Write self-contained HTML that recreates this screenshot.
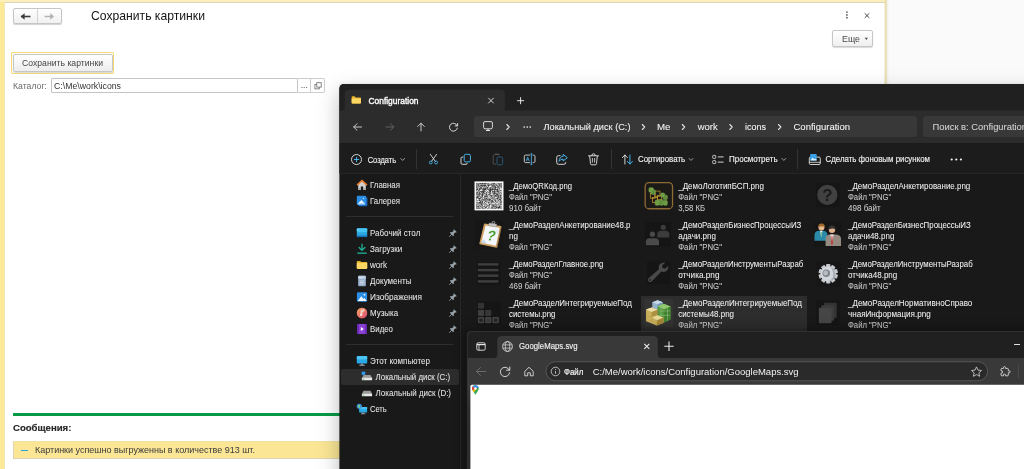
<!DOCTYPE html>
<html lang="ru"><head><meta charset="utf-8"><title>Сохранить картинки</title>
<style>
html,body{margin:0;padding:0;}
body{width:1024px;height:469px;overflow:hidden;background:#fafafa;position:relative;font-family:"Liberation Sans",sans-serif;}
.a{position:absolute;display:block;box-sizing:border-box;}
.t{position:absolute;white-space:pre;line-height:1;display:block;transform-origin:0 84.65%;}
.win{position:absolute;overflow:hidden;}
#root{position:absolute;left:0;top:0;width:1024px;height:469px;overflow:hidden;will-change:transform;transform:translateZ(0);}
</style></head><body><div id="root">
<div class="a" style="left:0px;top:0px;width:885px;height:469px;background:#fff;"></div>
<div class="a" style="left:884px;top:0px;width:5px;height:469px;background:linear-gradient(90deg,#ffffff 0,#e8deb0 22%,#e8deb0 42%,#f1ede0 60%,#fafafa 100%);"></div>
<div class="a" style="left:0px;top:0px;width:885px;height:2px;background:linear-gradient(#fcf2c2,#fbedb0);"></div>
<div class="a" style="left:0px;top:2px;width:885px;height:1px;background:#d9d5be;"></div>
<div class="a" style="left:0px;top:2px;width:5px;height:467px;background:linear-gradient(90deg,#fbea98 0,#fbea98 76%,#ecdfa2 86%,#fefbee 100%);"></div>
<div class="a" style="left:13px;top:8px;width:49px;height:16px;border:1px solid #c6c6c6;border-radius:2px;background:linear-gradient(#ffffff,#f0f0f0);box-shadow:0 1px 1px rgba(0,0,0,.18);"></div>
<div class="a" style="left:37px;top:9px;width:1px;height:14px;background:#d4d4d4;"></div>
<svg class="a" style="left:20px;top:12px;" width="12" height="9" viewBox="0 0 12 9"><g transform="translate(0.000 0.000)"><path d="M1 4.5H10.5" stroke="#3d3d3d" stroke-width="1.6" fill="none"/><path d="M0.6 4.5L4.6 1.2V7.8Z" fill="#3d3d3d"/></g></svg>
<svg class="a" style="left:43px;top:12px;" width="12" height="9" viewBox="0 0 12 9"><g transform="translate(0.000 0.000)"><path d="M1.5 4.5H10" stroke="#b4b4b4" stroke-width="1.5" fill="none"/><path d="M11.2 4.5L7.2 1.2V7.8Z" fill="#b4b4b4"/></g></svg>
<span class="t" style="left:91.00px;top:10.10px;font-size:12.18px;color:#151515;">Сохранить картинки</span>
<svg class="a" style="left:844px;top:10px;" width="6" height="10" viewBox="0 0 6 10"><g transform="translate(0.000 0.500)"><circle cx="2.9" cy="1.6" r="0.85" fill="#505050"/><circle cx="2.9" cy="4.4" r="0.85" fill="#505050"/><circle cx="2.9" cy="7.2" r="0.85" fill="#505050"/></g></svg>
<svg class="a" style="left:863px;top:11px;" width="8" height="9" viewBox="0 0 8 9"><g transform="translate(0.000 0.700)"><path d="M1.7 1.6L6.3 6.2M6.3 1.6L1.7 6.2" stroke="#484848" stroke-width="1" fill="none"/></g></svg>
<div class="a" style="left:832px;top:30px;width:41px;height:17px;border:1px solid #c6c6c6;border-radius:2px;background:linear-gradient(#ffffff,#efefef);box-shadow:0 1px 1px rgba(0,0,0,.15);"></div>
<span class="t" style="left:842.00px;top:35.00px;font-size:8.85px;color:#4a4a4a;">Еще</span>
<svg class="a" style="left:864px;top:37px;" width="5" height="4" viewBox="0 0 5 4"><g transform="translate(0.300 0.400)"><path d="M0.3 0.4H3.7L2 2.6Z" fill="#555"/></g></svg>
<div class="a" style="left:11px;top:52px;width:103px;height:22px;border:1px solid #f6da7c;border-radius:1px;background:#fffef6;"></div>
<div class="a" style="left:13px;top:54px;width:100px;height:18px;border:1px solid #c6c6c6;border-radius:2px;background:linear-gradient(#ffffff,#ededed);box-shadow:0 1px 1px rgba(0,0,0,.15);"></div>
<span class="t" style="left:22.00px;top:58.70px;font-size:8.65px;color:#454545;letter-spacing:0.014px;">Сохранить картинки</span>
<span class="t" style="left:13.00px;top:81.80px;font-size:8.69px;color:#6a6a6a;letter-spacing:0.008px;">Каталог:</span>
<div class="a" style="left:51px;top:78px;width:247px;height:15px;border:1px solid #c4c4c4;border-radius:1px;background:#fff;"></div>
<span class="t" style="left:54.00px;top:81.80px;font-size:8.74px;color:#333;">C:\Me\work\icons</span>
<div class="a" style="left:298px;top:78px;width:13px;height:15px;border:1px solid #cdcdcd;border-left:none;background:#fff;"></div>
<span class="t" style="left:300.70px;top:80.80px;font-size:8.5px;color:#444;">...</span>
<div class="a" style="left:311px;top:78px;width:14px;height:15px;border:1px solid #cdcdcd;border-left:none;background:#fff;border-radius:0 2px 2px 0;"></div>
<svg class="a" style="left:314px;top:82px;" width="8" height="8" viewBox="0 0 8 8"><g transform="translate(0.400 0.200)"><rect x="0.5" y="2.3" width="4.4" height="4.4" fill="#fff" stroke="#6a6a6a" stroke-width="0.8"/><rect x="2.4" y="0.5" width="4.4" height="4.4" fill="#fff" stroke="#6a6a6a" stroke-width="0.8"/></g></svg>
<div class="a" style="left:13px;top:413px;width:900px;height:3px;background:#069a46;"></div>
<span class="t" style="left:13.00px;top:423.40px;font-size:9.58px;color:#262626;font-weight:bold;-webkit-text-stroke:0.15px #262626;">Сообщения:</span>
<div class="a" style="left:13px;top:441px;width:900px;height:18px;background:#fbe696;border:1px solid #dcd5b4;border-top-color:#f0e2a0;"></div>
<div class="a" style="left:20.5px;top:449.6px;width:7.5px;height:1.4px;background:#2ea3dc;"></div>
<span class="t" style="left:35.00px;top:446.20px;font-size:8.99px;color:#3a3a3a;">Картинки успешно выгруженны в количестве 913 шт.</span>
<div class="a" style="left:343px;top:87px;width:700px;height:400px;background:#191919;box-shadow:0 9px 20px 4px rgba(0,0,0,.26), 0 0 3px 3px rgba(0,0,0,.10);"></div>
<svg class="a" style="left:330px;top:74px" width="694" height="395" viewBox="330 74 694 395">
<path d="M339.4 480V88.9Q339.4 83.9 344.4 83.9H1030V480Z" fill="#191919"/>
<path d="M339.4 111V88.9Q339.4 83.9 344.4 83.9H1030V111Z" fill="#202020"/>
<path d="M344.8 111V94Q344.8 89.7 349.1 89.7H500.6Q504.9 89.7 504.9 94V111Z" fill="#2c2c2c"/>
<rect x="339.4" y="110.4" width="700" height="32.8" fill="#2c2c2c"/>
<rect x="339.4" y="143.2" width="700" height="30.2" fill="#1c1c1c"/>
<rect x="339.4" y="172.9" width="700" height="0.8" fill="#2d2d2d"/>
</svg>
<svg class="a" style="left:341px;top:107px;" width="4" height="4" viewBox="0 0 4 4"><g transform="translate(0.800 0.400)"><path d="M3 0V3H0Q3 3 3 0Z" fill="#2c2c2c"/></g></svg>
<svg class="a" style="left:504px;top:107px;" width="4" height="4" viewBox="0 0 4 4"><g transform="translate(0.900 0.400)"><path d="M0 0V3H3Q0 3 0 0Z" fill="#2c2c2c"/></g></svg>
<svg class="a" style="left:351px;top:96px;" width="11" height="8" viewBox="0 0 11 8"><g transform="translate(0.400 0.000) scale(0.8909 0.9176)"><path d="M0.3 1.2Q0.3 0.4 1.1 0.4H3.6L4.8 1.5H9.9Q10.7 1.5 10.7 2.3V7.4Q10.7 8.2 9.9 8.2H1.1Q0.3 8.2 0.3 7.4Z" fill="#e8b62c"/><path d="M0.3 2.6H10.7V7.4Q10.7 8.2 9.9 8.2H1.1Q0.3 8.2 0.3 7.4Z" fill="#fbd663"/></g></svg>
<span class="t" style="left:368.50px;top:96.80px;font-size:8.41px;color:#ffffff;transform:scaleY(1.1);transform-origin:0 7.00px;-webkit-text-stroke:0.35px #ffffff;">Configuration</span>
<svg class="a" style="left:487px;top:97px;" width="8" height="8" viewBox="0 0 8 8"><g transform="translate(0.000 0.000)"><path d="M1.3 0.9L6.7 6.3M6.7 0.9L1.3 6.3" stroke="#e8e8e8" stroke-width="0.9" fill="none"/></g></svg>
<svg class="a" style="left:516px;top:96px;" width="10" height="10" viewBox="0 0 10 10"><g transform="translate(0.000 0.000)"><path d="M4.6 1.2V8.2M1.1 4.7H8.1" stroke="#ececec" stroke-width="0.95" fill="none"/></g></svg>
<svg class="a" style="left:353px;top:123px;" width="9" height="8" viewBox="0 0 9 8"><g transform="translate(0.000 0.000)"><path d="M8.5 4H0.8M4 0.7L0.7 4L4 7.3" stroke="#e6e6e6" stroke-width="0.85" fill="none" stroke-linecap="round" stroke-linejoin="round"/></g></svg>
<svg class="a" style="left:385px;top:123px;" width="10" height="8" viewBox="0 0 10 8"><g transform="translate(0.500 0.000)"><path d="M0.5 4H8.2M5 0.7L8.3 4L5 7.3" stroke="#6a6a6a" stroke-width="0.85" fill="none" stroke-linecap="round" stroke-linejoin="round"/></g></svg>
<svg class="a" style="left:417px;top:122px;" width="8" height="10" viewBox="0 0 8 10"><g transform="translate(0.000 0.500)"><path d="M4 8.5V0.8M0.7 4L4 0.7L7.3 4" stroke="#e6e6e6" stroke-width="0.85" fill="none" stroke-linecap="round" stroke-linejoin="round"/></g></svg>
<svg class="a" style="left:448px;top:121px;" width="11" height="12" viewBox="0 0 11 12"><g transform="translate(0.000 0.500)"><path d="M9.2 4.2A4 4 0 1 0 9.4 6.6" stroke="#e6e6e6" stroke-width="0.9" fill="none" stroke-linecap="round"/><path d="M9.6 2V4.4H7.2" stroke="#e6e6e6" stroke-width="0.9" fill="none" stroke-linecap="round" stroke-linejoin="round"/></g></svg>
<div class="a" style="left:474px;top:116px;width:443px;height:21px;background:#383838;border-radius:3px;"></div>
<svg class="a" style="left:483px;top:121px;" width="10" height="11" viewBox="0 0 10 11"><g transform="translate(0.000 0.000)"><rect x="0.6" y="0.6" width="8.8" height="7.2" rx="1.4" fill="none" stroke="#e8e8e8" stroke-width="0.9"/><path d="M3 9.5H7M5 7.8V9.4" stroke="#e8e8e8" stroke-width="1"/></g></svg>
<svg class="a" style="left:505px;top:123px;" width="6" height="8" viewBox="0 0 6 8"><g transform="translate(0.500 0.500)"><path d="M1.3 1L3.7 3.5L1.3 6" stroke="#e0e0e0" stroke-width="1.1" fill="none" stroke-linecap="round" stroke-linejoin="round"/></g></svg>
<svg class="a" style="left:523px;top:125px;" width="9" height="4" viewBox="0 0 9 4"><g transform="translate(0.000 0.000)"><circle cx="1.2" cy="2.1" r="0.82" fill="#ececec"/><circle cx="4.2" cy="2.1" r="0.82" fill="#ececec"/><circle cx="7.2" cy="2.1" r="0.82" fill="#ececec"/></g></svg>
<span class="t" style="left:543.50px;top:123.00px;font-size:9.19px;color:#f2f2f2;letter-spacing:0.010px;-webkit-text-stroke:0.08px #f2f2f2;">Локальный диск (C:)</span>
<svg class="a" style="left:641px;top:123px;" width="5" height="8" viewBox="0 0 5 8"><g transform="translate(0.000 0.500)"><path d="M1.3 1L3.7 3.5L1.3 6" stroke="#e0e0e0" stroke-width="1.1" fill="none" stroke-linecap="round" stroke-linejoin="round"/></g></svg>
<span class="t" style="left:657.00px;top:122.00px;font-size:9.72px;color:#f2f2f2;letter-spacing:-0.008px;-webkit-text-stroke:0.08px #f2f2f2;">Me</span>
<svg class="a" style="left:681px;top:123px;" width="5" height="8" viewBox="0 0 5 8"><g transform="translate(0.000 0.500)"><path d="M1.3 1L3.7 3.5L1.3 6" stroke="#e0e0e0" stroke-width="1.1" fill="none" stroke-linecap="round" stroke-linejoin="round"/></g></svg>
<span class="t" style="left:697.70px;top:122.00px;font-size:9.47px;color:#f2f2f2;-webkit-text-stroke:0.08px #f2f2f2;">work</span>
<svg class="a" style="left:728px;top:123px;" width="6" height="8" viewBox="0 0 6 8"><g transform="translate(0.500 0.500)"><path d="M1.3 1L3.7 3.5L1.3 6" stroke="#e0e0e0" stroke-width="1.1" fill="none" stroke-linecap="round" stroke-linejoin="round"/></g></svg>
<span class="t" style="left:745.00px;top:123.00px;font-size:9.0px;color:#f2f2f2;-webkit-text-stroke:0.08px #f2f2f2;">icons</span>
<svg class="a" style="left:777px;top:123px;" width="6" height="8" viewBox="0 0 6 8"><g transform="translate(0.200 0.500)"><path d="M1.3 1L3.7 3.5L1.3 6" stroke="#e0e0e0" stroke-width="1.1" fill="none" stroke-linecap="round" stroke-linejoin="round"/></g></svg>
<span class="t" style="left:793.50px;top:122.00px;font-size:9.5px;color:#f2f2f2;-webkit-text-stroke:0.08px #f2f2f2;">Configuration</span>
<div class="a" style="left:922.5px;top:116px;width:120px;height:21px;background:#383838;border-radius:3px;"></div>
<span class="t" style="left:932.50px;top:123.00px;font-size:9.38px;color:#d0d0d0;-webkit-text-stroke:0.08px #d0d0d0;">Поиск в: Configuration</span>
<svg class="a" style="left:350px;top:153px;" width="13" height="13" viewBox="0 0 13 13"><g transform="translate(0.500 0.500)"><circle cx="6" cy="6" r="5" fill="none" stroke="#e8e8e8" stroke-width="0.9"/><path d="M6 3.4V8.6M3.4 6H8.6" stroke="#4cc2ff" stroke-width="0.9"/></g></svg>
<span class="t" style="left:367.70px;top:156.60px;font-size:7.5px;color:#f2f2f2;transform:scaleY(1.1);transform-origin:0 6.00px;-webkit-text-stroke:0.12px #f2f2f2;">Создать</span>
<svg class="a" style="left:400px;top:157px;" width="6" height="5" viewBox="0 0 6 5"><g transform="translate(0.200 0.750)"><path d="M0.6 0.7L2.5 2.7L4.4 0.7" stroke="#bdbdbd" stroke-width="0.8" fill="none" stroke-linecap="round" stroke-linejoin="round"/></g></svg>
<div class="a" style="left:416px;top:148.5px;width:1px;height:20.5px;background:#333;"></div>
<svg class="a" style="left:428px;top:153px;" width="12" height="13" viewBox="0 0 12 13"><g transform="translate(0.000 0.000)"><path d="M2.3 1.3L7.3 8.3M8.6 1.3L3.6 8.3" stroke="#e8e8e8" stroke-width="0.85" fill="none" stroke-linecap="round"/><circle cx="2.8" cy="9.5" r="1.45" fill="none" stroke="#4cb8f0" stroke-width="0.85"/><circle cx="8.1" cy="9.5" r="1.45" fill="none" stroke="#4cb8f0" stroke-width="0.85"/></g></svg>
<svg class="a" style="left:460px;top:153px;" width="12" height="13" viewBox="0 0 12 13"><g transform="translate(0.000 0.500)"><path d="M3.4 3.6H2.2Q1 3.6 1 4.8V9.6Q1 10.8 2.2 10.8H6Q7.2 10.8 7.2 9.6" fill="none" stroke="#e8e8e8" stroke-width="0.9"/><rect x="4.2" y="0.8" width="6.2" height="7.6" rx="1.4" fill="none" stroke="#4cc2ff" stroke-width="0.9"/></g></svg>
<svg class="a" style="left:492px;top:153px;" width="12" height="13" viewBox="0 0 12 13"><g transform="translate(0.000 0.000)"><path d="M7.8 1.6H2.4Q1.2 1.6 1.2 2.8V10Q1.2 11.2 2.4 11.2H4" fill="none" stroke="#555" stroke-width="0.9"/><rect x="5" y="4" width="5.6" height="7.8" rx="1.2" fill="none" stroke="#2a5d7c" stroke-width="0.9"/><path d="M3.2 1.2H6.6" stroke="#555" stroke-width="1.2"/></g></svg>
<svg class="a" style="left:523px;top:153px;" width="13" height="13" viewBox="0 0 13 13"><g transform="translate(0.000 0.000)"><path d="M7.2 2.1H2.6Q1.3 2.1 1.3 3.4V8.3Q1.3 9.6 2.6 9.6H7.2M9.6 2.1H10.7Q12 2.1 12 3.4V8.3Q12 9.6 10.7 9.6H9.6" fill="none" stroke="#e0e0e0" stroke-width="0.85"/><path d="M8.4 0.8V11.4M7.4 0.8H9.4M7.4 11.4H9.4" stroke="#4cb8f0" stroke-width="0.85" fill="none"/><path d="M3.2 8L4.7 4.1L6.2 8M3.8 6.8H5.6" stroke="#4cb8f0" stroke-width="0.75" fill="none"/></g></svg>
<svg class="a" style="left:555px;top:153px;" width="14" height="13" viewBox="0 0 14 13"><g transform="translate(0.500 0.500)"><path d="M5 2.2H3Q1.2 2.2 1.2 4V9Q1.2 10.8 3 10.8H8.4Q10.2 10.8 10.2 9V8.4" fill="none" stroke="#e8e8e8" stroke-width="0.9"/><path d="M7.6 0.9L11.8 4.2L7.6 7.5V5.6Q5 5.4 3.6 7.8Q3.8 3.2 7.6 2.9Z" fill="none" stroke="#4cc2ff" stroke-width="0.9" stroke-linejoin="round"/></g></svg>
<svg class="a" style="left:587px;top:153px;" width="13" height="13" viewBox="0 0 13 13"><g transform="translate(0.500 0.000)"><path d="M1 2.8H11M4.2 2.6Q4.2 0.8 6 0.8Q7.8 0.8 7.8 2.6" fill="none" stroke="#e8e8e8" stroke-width="0.9" stroke-linecap="round"/><path d="M2.2 3L3 10.6Q3.1 11.8 4.3 11.8H7.7Q8.9 11.8 9 10.6L9.8 3" fill="none" stroke="#e8e8e8" stroke-width="0.9"/><path d="M4.9 5V9.6M7.1 5V9.6" stroke="#e8e8e8" stroke-width="0.8"/></g></svg>
<div class="a" style="left:611px;top:148.5px;width:1px;height:20.5px;background:#333;"></div>
<svg class="a" style="left:621px;top:154px;" width="13" height="11" viewBox="0 0 13 11"><g transform="translate(0.500 0.000)"><path d="M3.4 10V1M0.9 3.6L3.4 1L5.9 3.6" stroke="#e8e8e8" stroke-width="0.9" fill="none" stroke-linecap="round" stroke-linejoin="round"/><path d="M8.4 1V10M5.9 7.4L8.4 10L10.9 7.4" stroke="#4cc2ff" stroke-width="0.9" fill="none" stroke-linecap="round" stroke-linejoin="round"/></g></svg>
<span class="t" style="left:638.00px;top:156.40px;font-size:7.9px;color:#f2f2f2;transform:scaleY(1.1);transform-origin:0 6.00px;-webkit-text-stroke:0.12px #f2f2f2;">Сортировать</span>
<svg class="a" style="left:688px;top:157px;" width="6" height="5" viewBox="0 0 6 5"><g transform="translate(0.500 0.750)"><path d="M0.6 0.7L2.5 2.7L4.4 0.7" stroke="#bdbdbd" stroke-width="0.8" fill="none" stroke-linecap="round" stroke-linejoin="round"/></g></svg>
<svg class="a" style="left:712px;top:154px;" width="12" height="11" viewBox="0 0 12 11"><g transform="translate(0.000 0.500)"><rect x="0.7" y="0.9" width="3" height="3" rx="0.7" fill="none" stroke="#e8e8e8" stroke-width="0.8"/><rect x="0.7" y="6.1" width="3" height="3" rx="0.7" fill="none" stroke="#e8e8e8" stroke-width="0.8"/><path d="M5.8 2.4H11.6M5.8 7.6H11.6" stroke="#e8e8e8" stroke-width="0.9"/></g></svg>
<span class="t" style="left:729.00px;top:156.40px;font-size:8.01px;color:#f2f2f2;transform:scaleY(1.1);transform-origin:0 6.00px;-webkit-text-stroke:0.12px #f2f2f2;">Просмотреть</span>
<svg class="a" style="left:781px;top:157px;" width="6" height="5" viewBox="0 0 6 5"><g transform="translate(0.300 0.750)"><path d="M0.6 0.7L2.5 2.7L4.4 0.7" stroke="#bdbdbd" stroke-width="0.8" fill="none" stroke-linecap="round" stroke-linejoin="round"/></g></svg>
<div class="a" style="left:797px;top:148.5px;width:1px;height:20.5px;background:#333;"></div>
<svg class="a" style="left:808px;top:153px;" width="14" height="13" viewBox="0 0 14 13"><g transform="translate(0.500 0.500)"><rect x="0.8" y="3.6" width="11" height="7.4" rx="1.2" fill="#1c1c1c" stroke="#e8e8e8" stroke-width="0.9"/><rect x="1.6" y="0.6" width="6.6" height="6.4" rx="1" fill="#3aa0e8"/><path d="M2 6.6L4.2 4.2L6 5.8L7 5L8.2 6.2V7H2Z" fill="#d6efff"/><path d="M0.8 8.8H11.8" stroke="#e8e8e8" stroke-width="0.8"/></g></svg>
<span class="t" style="left:825.50px;top:156.40px;font-size:7.88px;color:#f2f2f2;transform:scaleY(1.1);transform-origin:0 6.00px;-webkit-text-stroke:0.12px #f2f2f2;">Сделать фоновым рисунком</span>
<svg class="a" style="left:950px;top:157px;" width="13" height="5" viewBox="0 0 13 5"><g transform="translate(0.000 0.800)"><circle cx="1.7" cy="1.7" r="1.1" fill="#f4f4f4"/><circle cx="6.3" cy="1.7" r="1.1" fill="#f4f4f4"/><circle cx="10.9" cy="1.7" r="1.1" fill="#f4f4f4"/></g></svg>
<div class="a" style="left:460px;top:174px;width:1px;height:300px;background:#272727;"></div>
<div class="a" style="left:341px;top:369px;width:117.5px;height:15.5px;background:#2d2d2d;border-radius:2px;"></div>
<div class="a" style="left:346px;top:216px;width:107px;height:1px;background:#2e2e2e;"></div>
<div class="a" style="left:346px;top:344px;width:107px;height:1px;background:#2e2e2e;"></div>
<svg width="0" height="0" style="position:absolute"><defs><linearGradient id="mg" x1="0" y1="0" x2="1" y2="1"><stop offset="0" stop-color="#f2a65a"/><stop offset="1" stop-color="#d94a7a"/></linearGradient></defs></svg>
<svg class="a" style="left:356px;top:179px;" width="12" height="12" viewBox="0 0 12 12"><g transform="translate(0.500 0.500)"><path d="M1.7 5V10.4H4.3V6.9H6.7V10.4H9.3V5L5.5 1.6Z" fill="#cfcfcf"/><path d="M1.7 8.4H4.3V10.4H1.7ZM6.7 8.4H9.3V10.4H6.7Z" fill="#a8a8a8"/><path d="M5.5 0L11 5.1L10 6.2L5.5 2.1L1 6.2L0 5.1Z" fill="#f07f2c"/></g></svg>
<span class="t" style="left:370.00px;top:182.20px;font-size:7.88px;color:#e6e6e6;transform:scaleY(1.1);transform-origin:0 6.00px;-webkit-text-stroke:0.04px #e6e6e6;">Главная</span>
<svg class="a" style="left:356px;top:195px;" width="12" height="12" viewBox="0 0 12 12"><g transform="translate(0.500 0.500)"><rect x="1.9" y="1.7" width="9" height="9" rx="1.2" fill="#1b6cc0"/><rect x="0.3" y="0.2" width="9.4" height="9" rx="1.2" fill="#2b8de4"/><path d="M1.2 8.3L4.9 4.5L8.6 8.3Z" fill="#f2f8ff"/><path d="M1 8.3H8.8V8.6Q8.8 9.2 8.2 9.2H1.6Q1 9.2 1 8.6Z" fill="#8cc4f4"/><circle cx="7" cy="2.8" r="0.6" fill="#e8f4ff"/></g></svg>
<span class="t" style="left:370.00px;top:198.20px;font-size:7.82px;color:#e6e6e6;transform:scaleY(1.1);transform-origin:0 6.00px;-webkit-text-stroke:0.04px #e6e6e6;">Галерея</span>
<svg class="a" style="left:356px;top:227px;" width="12" height="12" viewBox="0 0 12 12"><g transform="translate(0.500 0.500)"><rect x="0.3" y="0.8" width="10.4" height="8.2" rx="1" fill="#2aa5e0"/><rect x="0.3" y="0.8" width="10.4" height="4" rx="1" fill="#45c3f2"/><rect x="0.3" y="8" width="10.4" height="1.6" fill="#1574b5"/><rect x="1.2" y="1.8" width="0.9" height="0.9" fill="#d8f3ff"/></g></svg>
<span class="t" style="left:370.00px;top:230.20px;font-size:8.01px;color:#e6e6e6;letter-spacing:0.007px;transform:scaleY(1.1);transform-origin:0 6.00px;-webkit-text-stroke:0.04px #e6e6e6;">Рабочий стол</span>
<svg class="a" style="left:448px;top:228px;" width="10" height="10" viewBox="0 0 10 10"><g transform="translate(0.800 0.800) scale(1.0500 1.0500)"><path d="M4.9 0.5L7.5 3.1Q7 3.8 6 3.5L4.7 5L4.9 6.3L4.2 7L1 3.8L1.7 3.1L3 3.3L4.5 2Q4.2 1 4.9 0.5Z" fill="#98a2a9"/><path d="M2.7 5.3L0.7 7.3" stroke="#98a2a9" stroke-width="0.9" stroke-linecap="round"/></g></svg>
<svg class="a" style="left:356px;top:243px;" width="12" height="12" viewBox="0 0 12 12"><g transform="translate(0.500 0.500)"><path d="M5.5 0.6V6.6M2.6 4L5.5 6.9L8.4 4" stroke="#21b89c" stroke-width="1.2" fill="none" stroke-linecap="round" stroke-linejoin="round"/><path d="M1.2 9.6H9.8" stroke="#21b89c" stroke-width="1.2" stroke-linecap="round"/></g></svg>
<span class="t" style="left:370.00px;top:246.20px;font-size:8.0px;color:#e6e6e6;transform:scaleY(1.1);transform-origin:0 6.00px;-webkit-text-stroke:0.04px #e6e6e6;">Загрузки</span>
<svg class="a" style="left:448px;top:244px;" width="10" height="10" viewBox="0 0 10 10"><g transform="translate(0.800 0.800) scale(1.0500 1.0500)"><path d="M4.9 0.5L7.5 3.1Q7 3.8 6 3.5L4.7 5L4.9 6.3L4.2 7L1 3.8L1.7 3.1L3 3.3L4.5 2Q4.2 1 4.9 0.5Z" fill="#98a2a9"/><path d="M2.7 5.3L0.7 7.3" stroke="#98a2a9" stroke-width="0.9" stroke-linecap="round"/></g></svg>
<svg class="a" style="left:356px;top:259px;" width="12" height="12" viewBox="0 0 12 12"><g transform="translate(0.500 0.500)"><path d="M0.3 2.2Q0.3 1.4 1.1 1.4H3.6L4.8 2.5H9.9Q10.7 2.5 10.7 3.3V8.6Q10.7 9.4 9.9 9.4H1.1Q0.3 9.4 0.3 8.6Z" fill="#e8b62c"/><path d="M0.3 3.6H10.7V8.6Q10.7 9.4 9.9 9.4H1.1Q0.3 9.4 0.3 8.6Z" fill="#fbd663"/></g></svg>
<span class="t" style="left:370.00px;top:262.20px;font-size:8.05px;color:#e6e6e6;transform:scaleY(1.1);transform-origin:0 6.00px;-webkit-text-stroke:0.04px #e6e6e6;">work</span>
<svg class="a" style="left:448px;top:260px;" width="10" height="10" viewBox="0 0 10 10"><g transform="translate(0.800 0.800) scale(1.0500 1.0500)"><path d="M4.9 0.5L7.5 3.1Q7 3.8 6 3.5L4.7 5L4.9 6.3L4.2 7L1 3.8L1.7 3.1L3 3.3L4.5 2Q4.2 1 4.9 0.5Z" fill="#98a2a9"/><path d="M2.7 5.3L0.7 7.3" stroke="#98a2a9" stroke-width="0.9" stroke-linecap="round"/></g></svg>
<svg class="a" style="left:356px;top:275px;" width="12" height="12" viewBox="0 0 12 12"><g transform="translate(0.500 0.500)"><rect x="1.6" y="0.3" width="7.8" height="10.4" rx="1" fill="#8fa6c4"/><rect x="1.6" y="0.3" width="7.8" height="3.4" rx="1" fill="#b9c9de"/><path d="M3 2H6M3 5.4H8M3 7H8M3 8.6H8" stroke="#e8eef7" stroke-width="0.7"/></g></svg>
<span class="t" style="left:370.00px;top:278.20px;font-size:8.05px;color:#e6e6e6;transform:scaleY(1.1);transform-origin:0 6.00px;-webkit-text-stroke:0.04px #e6e6e6;">Документы</span>
<svg class="a" style="left:448px;top:276px;" width="10" height="10" viewBox="0 0 10 10"><g transform="translate(0.800 0.800) scale(1.0500 1.0500)"><path d="M4.9 0.5L7.5 3.1Q7 3.8 6 3.5L4.7 5L4.9 6.3L4.2 7L1 3.8L1.7 3.1L3 3.3L4.5 2Q4.2 1 4.9 0.5Z" fill="#98a2a9"/><path d="M2.7 5.3L0.7 7.3" stroke="#98a2a9" stroke-width="0.9" stroke-linecap="round"/></g></svg>
<svg class="a" style="left:356px;top:291px;" width="12" height="12" viewBox="0 0 12 12"><g transform="translate(0.500 0.500)"><rect x="0.4" y="0.8" width="10.2" height="9.4" rx="1.3" fill="#2b8de4"/><path d="M1.2 9.4L4.8 4.8L7 7.4L8.1 6.4L10.2 9.4Z" fill="#f2f8ff"/><circle cx="8" cy="3.2" r="0.9" fill="#e8f4ff"/></g></svg>
<span class="t" style="left:370.00px;top:294.20px;font-size:8.27px;color:#e6e6e6;transform:scaleY(1.1);transform-origin:0 6.00px;-webkit-text-stroke:0.04px #e6e6e6;">Изображения</span>
<svg class="a" style="left:448px;top:292px;" width="10" height="10" viewBox="0 0 10 10"><g transform="translate(0.800 0.800) scale(1.0500 1.0500)"><path d="M4.9 0.5L7.5 3.1Q7 3.8 6 3.5L4.7 5L4.9 6.3L4.2 7L1 3.8L1.7 3.1L3 3.3L4.5 2Q4.2 1 4.9 0.5Z" fill="#98a2a9"/><path d="M2.7 5.3L0.7 7.3" stroke="#98a2a9" stroke-width="0.9" stroke-linecap="round"/></g></svg>
<svg class="a" style="left:356px;top:307px;" width="12" height="12" viewBox="0 0 12 12"><g transform="translate(0.500 0.500)"><circle cx="5.5" cy="5.5" r="5.2" fill="#e2674a"/><circle cx="5.5" cy="5.5" r="5.2" fill="url(#mg)"/><path d="M4.6 7.6V2.8L7.6 2.2V3.4L5.4 3.9V7.6" stroke="#fff" stroke-width="0.7" fill="none"/><ellipse cx="4.4" cy="7.6" rx="1" ry="0.8" fill="#fff"/></g></svg>
<span class="t" style="left:370.00px;top:310.20px;font-size:7.94px;color:#e6e6e6;transform:scaleY(1.1);transform-origin:0 6.00px;-webkit-text-stroke:0.04px #e6e6e6;">Музыка</span>
<svg class="a" style="left:448px;top:308px;" width="10" height="10" viewBox="0 0 10 10"><g transform="translate(0.800 0.800) scale(1.0500 1.0500)"><path d="M4.9 0.5L7.5 3.1Q7 3.8 6 3.5L4.7 5L4.9 6.3L4.2 7L1 3.8L1.7 3.1L3 3.3L4.5 2Q4.2 1 4.9 0.5Z" fill="#98a2a9"/><path d="M2.7 5.3L0.7 7.3" stroke="#98a2a9" stroke-width="0.9" stroke-linecap="round"/></g></svg>
<svg class="a" style="left:356px;top:323px;" width="12" height="12" viewBox="0 0 12 12"><g transform="translate(0.500 0.500)"><rect x="0.8" y="0.4" width="9.4" height="10.2" rx="1.2" fill="#8a3fd6"/><rect x="0.8" y="0.4" width="1.6" height="10.2" fill="#6a28b4"/><rect x="8.6" y="0.4" width="1.6" height="10.2" fill="#6a28b4"/><path d="M4.4 3.6L7.2 5.5L4.4 7.4Z" fill="#fff"/></g></svg>
<span class="t" style="left:370.00px;top:326.20px;font-size:7.87px;color:#e6e6e6;letter-spacing:0.006px;transform:scaleY(1.1);transform-origin:0 6.00px;-webkit-text-stroke:0.04px #e6e6e6;">Видео</span>
<svg class="a" style="left:448px;top:324px;" width="10" height="10" viewBox="0 0 10 10"><g transform="translate(0.800 0.800) scale(1.0500 1.0500)"><path d="M4.9 0.5L7.5 3.1Q7 3.8 6 3.5L4.7 5L4.9 6.3L4.2 7L1 3.8L1.7 3.1L3 3.3L4.5 2Q4.2 1 4.9 0.5Z" fill="#98a2a9"/><path d="M2.7 5.3L0.7 7.3" stroke="#98a2a9" stroke-width="0.9" stroke-linecap="round"/></g></svg>
<svg class="a" style="left:356px;top:355px;" width="12" height="12" viewBox="0 0 12 12"><g transform="translate(0.500 0.500)"><rect x="0.3" y="0.6" width="10.4" height="7.4" rx="0.8" fill="#28a8e4"/><rect x="0.3" y="0.6" width="10.4" height="3.4" rx="0.8" fill="#49c4f3"/><rect x="4.2" y="8" width="2.6" height="1.4" fill="#7d8a94"/><rect x="2.8" y="9.3" width="5.4" height="0.9" fill="#a9b4bc"/></g></svg>
<span class="t" style="left:370.00px;top:358.20px;font-size:8.02px;color:#e6e6e6;transform:scaleY(1.1);transform-origin:0 6.00px;-webkit-text-stroke:0.04px #e6e6e6;">Этот компьютер</span>
<svg class="a" style="left:361px;top:371px;" width="12" height="12" viewBox="0 0 12 12"><g transform="translate(0.500 0.500)"><rect x="0.2" y="0.2" width="3.6" height="3.2" fill="#2f9be8"/><path d="M2 3.6H9L10.6 6.4H0.6Z" fill="#9a9a9a"/><rect x="0.4" y="6.2" width="10.2" height="2.6" rx="0.6" fill="#e6e6e6"/><rect x="1.2" y="7.2" width="1.6" height="0.8" fill="#46b85a"/></g></svg>
<span class="t" style="left:375.60px;top:374.20px;font-size:7.87px;color:#e6e6e6;letter-spacing:0.006px;transform:scaleY(1.1);transform-origin:0 6.00px;-webkit-text-stroke:0.04px #e6e6e6;">Локальный диск (C:)</span>
<svg class="a" style="left:361px;top:387px;" width="12" height="12" viewBox="0 0 12 12"><g transform="translate(0.500 0.500)"><path d="M2 3.2H9L10.6 6.2H0.6Z" fill="#9a9a9a"/><rect x="0.4" y="6" width="10.2" height="2.8" rx="0.6" fill="#e6e6e6"/><rect x="1.2" y="7.1" width="1.6" height="0.8" fill="#46b85a"/></g></svg>
<span class="t" style="left:375.60px;top:390.20px;font-size:7.98px;color:#e6e6e6;transform:scaleY(1.1);transform-origin:0 6.00px;-webkit-text-stroke:0.04px #e6e6e6;">Локальный диск (D:)</span>
<svg class="a" style="left:356px;top:403px;" width="12" height="12" viewBox="0 0 12 12"><g transform="translate(0.500 0.500)"><rect x="2.6" y="3.4" width="8" height="5.6" rx="0.6" fill="#28a8e4"/><rect x="2.6" y="3.4" width="8" height="2.4" rx="0.6" fill="#49c4f3"/><rect x="5.6" y="9" width="2" height="1" fill="#8a949c"/><rect x="4.4" y="9.9" width="4.4" height="0.8" fill="#b0bac2"/><circle cx="2.8" cy="2.8" r="2.6" fill="#3d8fd8"/><path d="M1.4 1.6Q2.6 0.8 3.6 1.8Q3 3 3.8 4Q2.6 5 1.8 3.8Q2.2 2.6 1.4 1.6Z" fill="#7ad07a"/></g></svg>
<span class="t" style="left:370.00px;top:406.20px;font-size:7.51px;color:#e6e6e6;transform:scaleY(1.1);transform-origin:0 6.00px;-webkit-text-stroke:0.04px #e6e6e6;">Сеть</span>
<div class="a" style="left:640.5px;top:296px;width:166.5px;height:35.5px;background:#2d2d2d;"></div>
<span class="t" style="left:509.00px;top:182.60px;font-size:7.7px;color:#f0f0f0;letter-spacing:0.008px;transform:scaleY(1.1);transform-origin:0 6.00px;-webkit-text-stroke:0.04px #f0f0f0;">_ДемоQRКод.png</span>
<span class="t" style="left:509.00px;top:193.65px;font-size:7.66px;color:#cfcfcf;transform:scaleY(1.1);transform-origin:0 6.00px;-webkit-text-stroke:0.04px #cfcfcf;">Файл "PNG"</span>
<span class="t" style="left:509.00px;top:204.70px;font-size:7.99px;color:#cfcfcf;transform:scaleY(1.1);transform-origin:0 6.00px;-webkit-text-stroke:0.04px #cfcfcf;">910 байт</span>
<svg class="a" style="left:474px;top:181px;" width="30" height="30" viewBox="0 0 30 30"><g transform="translate(0.500 0.400) scale(0.9667 0.9667)"><rect x="0" y="0" width="30" height="30" fill="#f6f6f6"/><path d="M5.8 1.7h0.59v0.59h-0.59zM6.4 1.7h0.59v0.59h-0.59zM7.6 1.7h0.59v0.59h-0.59zM8.2 1.7h0.59v0.59h-0.59zM8.8 1.7h0.59v0.59h-0.59zM9.4 1.7h0.59v0.59h-0.59zM10.0 1.7h0.59v0.59h-0.59zM10.6 1.7h0.59v0.59h-0.59zM11.2 1.7h0.59v0.59h-0.59zM11.7 1.7h0.59v0.59h-0.59zM12.3 1.7h0.59v0.59h-0.59zM12.9 1.7h0.59v0.59h-0.59zM14.1 1.7h0.59v0.59h-0.59zM14.7 1.7h0.59v0.59h-0.59zM17.1 1.7h0.59v0.59h-0.59zM18.3 1.7h0.59v0.59h-0.59zM19.4 1.7h0.59v0.59h-0.59zM20.0 1.7h0.59v0.59h-0.59zM20.6 1.7h0.59v0.59h-0.59zM21.2 1.7h0.59v0.59h-0.59zM22.4 1.7h0.59v0.59h-0.59zM5.8 2.3h0.59v0.59h-0.59zM6.4 2.3h0.59v0.59h-0.59zM7.0 2.3h0.59v0.59h-0.59zM7.6 2.3h0.59v0.59h-0.59zM8.2 2.3h0.59v0.59h-0.59zM9.4 2.3h0.59v0.59h-0.59zM10.0 2.3h0.59v0.59h-0.59zM11.2 2.3h0.59v0.59h-0.59zM11.7 2.3h0.59v0.59h-0.59zM13.5 2.3h0.59v0.59h-0.59zM14.7 2.3h0.59v0.59h-0.59zM16.5 2.3h0.59v0.59h-0.59zM17.7 2.3h0.59v0.59h-0.59zM18.3 2.3h0.59v0.59h-0.59zM19.4 2.3h0.59v0.59h-0.59zM20.0 2.3h0.59v0.59h-0.59zM20.6 2.3h0.59v0.59h-0.59zM23.6 2.3h0.59v0.59h-0.59zM7.6 2.9h0.59v0.59h-0.59zM9.4 2.9h0.59v0.59h-0.59zM10.6 2.9h0.59v0.59h-0.59zM13.5 2.9h0.59v0.59h-0.59zM14.1 2.9h0.59v0.59h-0.59zM15.3 2.9h0.59v0.59h-0.59zM15.9 2.9h0.59v0.59h-0.59zM16.5 2.9h0.59v0.59h-0.59zM17.1 2.9h0.59v0.59h-0.59zM17.7 2.9h0.59v0.59h-0.59zM18.8 2.9h0.59v0.59h-0.59zM19.4 2.9h0.59v0.59h-0.59zM20.0 2.9h0.59v0.59h-0.59zM21.2 2.9h0.59v0.59h-0.59zM21.8 2.9h0.59v0.59h-0.59zM22.4 2.9h0.59v0.59h-0.59zM6.4 3.5h0.59v0.59h-0.59zM7.0 3.5h0.59v0.59h-0.59zM7.6 3.5h0.59v0.59h-0.59zM9.4 3.5h0.59v0.59h-0.59zM10.0 3.5h0.59v0.59h-0.59zM10.6 3.5h0.59v0.59h-0.59zM11.2 3.5h0.59v0.59h-0.59zM11.7 3.5h0.59v0.59h-0.59zM12.9 3.5h0.59v0.59h-0.59zM13.5 3.5h0.59v0.59h-0.59zM14.1 3.5h0.59v0.59h-0.59zM14.7 3.5h0.59v0.59h-0.59zM17.1 3.5h0.59v0.59h-0.59zM18.8 3.5h0.59v0.59h-0.59zM21.8 3.5h0.59v0.59h-0.59zM22.4 3.5h0.59v0.59h-0.59zM23.0 3.5h0.59v0.59h-0.59zM5.8 4.1h0.59v0.59h-0.59zM6.4 4.1h0.59v0.59h-0.59zM7.0 4.1h0.59v0.59h-0.59zM7.6 4.1h0.59v0.59h-0.59zM8.2 4.1h0.59v0.59h-0.59zM8.8 4.1h0.59v0.59h-0.59zM9.4 4.1h0.59v0.59h-0.59zM10.0 4.1h0.59v0.59h-0.59zM10.6 4.1h0.59v0.59h-0.59zM11.2 4.1h0.59v0.59h-0.59zM11.7 4.1h0.59v0.59h-0.59zM13.5 4.1h0.59v0.59h-0.59zM14.1 4.1h0.59v0.59h-0.59zM14.7 4.1h0.59v0.59h-0.59zM15.3 4.1h0.59v0.59h-0.59zM15.9 4.1h0.59v0.59h-0.59zM17.7 4.1h0.59v0.59h-0.59zM18.3 4.1h0.59v0.59h-0.59zM18.8 4.1h0.59v0.59h-0.59zM19.4 4.1h0.59v0.59h-0.59zM20.0 4.1h0.59v0.59h-0.59zM20.6 4.1h0.59v0.59h-0.59zM21.8 4.1h0.59v0.59h-0.59zM22.4 4.1h0.59v0.59h-0.59zM23.6 4.1h0.59v0.59h-0.59zM5.8 4.7h0.59v0.59h-0.59zM6.4 4.7h0.59v0.59h-0.59zM7.0 4.7h0.59v0.59h-0.59zM7.6 4.7h0.59v0.59h-0.59zM10.0 4.7h0.59v0.59h-0.59zM10.6 4.7h0.59v0.59h-0.59zM11.2 4.7h0.59v0.59h-0.59zM12.3 4.7h0.59v0.59h-0.59zM13.5 4.7h0.59v0.59h-0.59zM14.1 4.7h0.59v0.59h-0.59zM18.3 4.7h0.59v0.59h-0.59zM18.8 4.7h0.59v0.59h-0.59zM19.4 4.7h0.59v0.59h-0.59zM20.0 4.7h0.59v0.59h-0.59zM20.6 4.7h0.59v0.59h-0.59zM21.2 4.7h0.59v0.59h-0.59zM21.8 4.7h0.59v0.59h-0.59zM23.6 4.7h0.59v0.59h-0.59zM7.6 5.2h0.59v0.59h-0.59zM8.2 5.2h0.59v0.59h-0.59zM8.8 5.2h0.59v0.59h-0.59zM9.4 5.2h0.59v0.59h-0.59zM10.0 5.2h0.59v0.59h-0.59zM12.3 5.2h0.59v0.59h-0.59zM14.1 5.2h0.59v0.59h-0.59zM17.1 5.2h0.59v0.59h-0.59zM17.7 5.2h0.59v0.59h-0.59zM18.8 5.2h0.59v0.59h-0.59zM20.6 5.2h0.59v0.59h-0.59zM21.2 5.2h0.59v0.59h-0.59zM23.0 5.2h0.59v0.59h-0.59zM23.6 5.2h0.59v0.59h-0.59zM1.7 5.8h0.59v0.59h-0.59zM3.5 5.8h0.59v0.59h-0.59zM5.8 5.8h0.59v0.59h-0.59zM6.4 5.8h0.59v0.59h-0.59zM7.0 5.8h0.59v0.59h-0.59zM7.6 5.8h0.59v0.59h-0.59zM9.4 5.8h0.59v0.59h-0.59zM10.6 5.8h0.59v0.59h-0.59zM12.3 5.8h0.59v0.59h-0.59zM12.9 5.8h0.59v0.59h-0.59zM13.5 5.8h0.59v0.59h-0.59zM14.1 5.8h0.59v0.59h-0.59zM15.3 5.8h0.59v0.59h-0.59zM15.9 5.8h0.59v0.59h-0.59zM16.5 5.8h0.59v0.59h-0.59zM17.7 5.8h0.59v0.59h-0.59zM18.3 5.8h0.59v0.59h-0.59zM20.0 5.8h0.59v0.59h-0.59zM21.2 5.8h0.59v0.59h-0.59zM21.8 5.8h0.59v0.59h-0.59zM22.4 5.8h0.59v0.59h-0.59zM23.0 5.8h0.59v0.59h-0.59zM23.6 5.8h0.59v0.59h-0.59zM24.2 5.8h0.59v0.59h-0.59zM24.8 5.8h0.59v0.59h-0.59zM25.9 5.8h0.59v0.59h-0.59zM26.5 5.8h0.59v0.59h-0.59zM27.7 5.8h0.59v0.59h-0.59zM1.7 6.4h0.59v0.59h-0.59zM2.3 6.4h0.59v0.59h-0.59zM2.9 6.4h0.59v0.59h-0.59zM4.1 6.4h0.59v0.59h-0.59zM5.2 6.4h0.59v0.59h-0.59zM5.8 6.4h0.59v0.59h-0.59zM7.0 6.4h0.59v0.59h-0.59zM9.4 6.4h0.59v0.59h-0.59zM10.6 6.4h0.59v0.59h-0.59zM11.2 6.4h0.59v0.59h-0.59zM12.3 6.4h0.59v0.59h-0.59zM12.9 6.4h0.59v0.59h-0.59zM13.5 6.4h0.59v0.59h-0.59zM16.5 6.4h0.59v0.59h-0.59zM17.1 6.4h0.59v0.59h-0.59zM18.8 6.4h0.59v0.59h-0.59zM19.4 6.4h0.59v0.59h-0.59zM20.0 6.4h0.59v0.59h-0.59zM20.6 6.4h0.59v0.59h-0.59zM21.2 6.4h0.59v0.59h-0.59zM21.8 6.4h0.59v0.59h-0.59zM24.2 6.4h0.59v0.59h-0.59zM25.9 6.4h0.59v0.59h-0.59zM27.7 6.4h0.59v0.59h-0.59zM2.3 7.0h0.59v0.59h-0.59zM2.9 7.0h0.59v0.59h-0.59zM4.7 7.0h0.59v0.59h-0.59zM5.2 7.0h0.59v0.59h-0.59zM5.8 7.0h0.59v0.59h-0.59zM6.4 7.0h0.59v0.59h-0.59zM7.0 7.0h0.59v0.59h-0.59zM7.6 7.0h0.59v0.59h-0.59zM8.8 7.0h0.59v0.59h-0.59zM9.4 7.0h0.59v0.59h-0.59zM10.0 7.0h0.59v0.59h-0.59zM10.6 7.0h0.59v0.59h-0.59zM11.2 7.0h0.59v0.59h-0.59zM12.3 7.0h0.59v0.59h-0.59zM12.9 7.0h0.59v0.59h-0.59zM15.3 7.0h0.59v0.59h-0.59zM15.9 7.0h0.59v0.59h-0.59zM16.5 7.0h0.59v0.59h-0.59zM17.7 7.0h0.59v0.59h-0.59zM18.3 7.0h0.59v0.59h-0.59zM18.8 7.0h0.59v0.59h-0.59zM20.6 7.0h0.59v0.59h-0.59zM21.2 7.0h0.59v0.59h-0.59zM23.6 7.0h0.59v0.59h-0.59zM24.2 7.0h0.59v0.59h-0.59zM25.3 7.0h0.59v0.59h-0.59zM25.9 7.0h0.59v0.59h-0.59zM1.7 7.6h0.59v0.59h-0.59zM2.9 7.6h0.59v0.59h-0.59zM4.1 7.6h0.59v0.59h-0.59zM4.7 7.6h0.59v0.59h-0.59zM5.2 7.6h0.59v0.59h-0.59zM6.4 7.6h0.59v0.59h-0.59zM7.0 7.6h0.59v0.59h-0.59zM7.6 7.6h0.59v0.59h-0.59zM8.2 7.6h0.59v0.59h-0.59zM8.8 7.6h0.59v0.59h-0.59zM9.4 7.6h0.59v0.59h-0.59zM10.0 7.6h0.59v0.59h-0.59zM10.6 7.6h0.59v0.59h-0.59zM11.2 7.6h0.59v0.59h-0.59zM11.7 7.6h0.59v0.59h-0.59zM12.9 7.6h0.59v0.59h-0.59zM13.5 7.6h0.59v0.59h-0.59zM14.1 7.6h0.59v0.59h-0.59zM14.7 7.6h0.59v0.59h-0.59zM15.3 7.6h0.59v0.59h-0.59zM15.9 7.6h0.59v0.59h-0.59zM16.5 7.6h0.59v0.59h-0.59zM17.7 7.6h0.59v0.59h-0.59zM18.3 7.6h0.59v0.59h-0.59zM18.8 7.6h0.59v0.59h-0.59zM20.0 7.6h0.59v0.59h-0.59zM21.2 7.6h0.59v0.59h-0.59zM21.8 7.6h0.59v0.59h-0.59zM23.0 7.6h0.59v0.59h-0.59zM23.6 7.6h0.59v0.59h-0.59zM25.3 7.6h0.59v0.59h-0.59zM27.7 7.6h0.59v0.59h-0.59zM1.7 8.2h0.59v0.59h-0.59zM2.3 8.2h0.59v0.59h-0.59zM2.9 8.2h0.59v0.59h-0.59zM3.5 8.2h0.59v0.59h-0.59zM4.7 8.2h0.59v0.59h-0.59zM5.2 8.2h0.59v0.59h-0.59zM5.8 8.2h0.59v0.59h-0.59zM8.2 8.2h0.59v0.59h-0.59zM8.8 8.2h0.59v0.59h-0.59zM9.4 8.2h0.59v0.59h-0.59zM10.0 8.2h0.59v0.59h-0.59zM10.6 8.2h0.59v0.59h-0.59zM11.2 8.2h0.59v0.59h-0.59zM11.7 8.2h0.59v0.59h-0.59zM13.5 8.2h0.59v0.59h-0.59zM14.1 8.2h0.59v0.59h-0.59zM15.3 8.2h0.59v0.59h-0.59zM15.9 8.2h0.59v0.59h-0.59zM16.5 8.2h0.59v0.59h-0.59zM17.1 8.2h0.59v0.59h-0.59zM17.7 8.2h0.59v0.59h-0.59zM18.3 8.2h0.59v0.59h-0.59zM18.8 8.2h0.59v0.59h-0.59zM19.4 8.2h0.59v0.59h-0.59zM20.0 8.2h0.59v0.59h-0.59zM20.6 8.2h0.59v0.59h-0.59zM21.2 8.2h0.59v0.59h-0.59zM21.8 8.2h0.59v0.59h-0.59zM22.4 8.2h0.59v0.59h-0.59zM23.0 8.2h0.59v0.59h-0.59zM23.6 8.2h0.59v0.59h-0.59zM24.2 8.2h0.59v0.59h-0.59zM25.3 8.2h0.59v0.59h-0.59zM1.7 8.8h0.59v0.59h-0.59zM2.3 8.8h0.59v0.59h-0.59zM3.5 8.8h0.59v0.59h-0.59zM5.2 8.8h0.59v0.59h-0.59zM8.8 8.8h0.59v0.59h-0.59zM9.4 8.8h0.59v0.59h-0.59zM10.0 8.8h0.59v0.59h-0.59zM14.7 8.8h0.59v0.59h-0.59zM15.3 8.8h0.59v0.59h-0.59zM15.9 8.8h0.59v0.59h-0.59zM16.5 8.8h0.59v0.59h-0.59zM17.1 8.8h0.59v0.59h-0.59zM18.3 8.8h0.59v0.59h-0.59zM20.6 8.8h0.59v0.59h-0.59zM21.2 8.8h0.59v0.59h-0.59zM23.0 8.8h0.59v0.59h-0.59zM23.6 8.8h0.59v0.59h-0.59zM24.8 8.8h0.59v0.59h-0.59zM25.9 8.8h0.59v0.59h-0.59zM26.5 8.8h0.59v0.59h-0.59zM27.1 8.8h0.59v0.59h-0.59zM1.7 9.4h0.59v0.59h-0.59zM3.5 9.4h0.59v0.59h-0.59zM4.1 9.4h0.59v0.59h-0.59zM4.7 9.4h0.59v0.59h-0.59zM7.6 9.4h0.59v0.59h-0.59zM8.2 9.4h0.59v0.59h-0.59zM8.8 9.4h0.59v0.59h-0.59zM10.0 9.4h0.59v0.59h-0.59zM11.2 9.4h0.59v0.59h-0.59zM11.7 9.4h0.59v0.59h-0.59zM12.3 9.4h0.59v0.59h-0.59zM14.7 9.4h0.59v0.59h-0.59zM15.3 9.4h0.59v0.59h-0.59zM15.9 9.4h0.59v0.59h-0.59zM16.5 9.4h0.59v0.59h-0.59zM17.1 9.4h0.59v0.59h-0.59zM18.3 9.4h0.59v0.59h-0.59zM20.0 9.4h0.59v0.59h-0.59zM20.6 9.4h0.59v0.59h-0.59zM22.4 9.4h0.59v0.59h-0.59zM23.0 9.4h0.59v0.59h-0.59zM23.6 9.4h0.59v0.59h-0.59zM24.8 9.4h0.59v0.59h-0.59zM25.9 9.4h0.59v0.59h-0.59zM26.5 9.4h0.59v0.59h-0.59zM27.7 9.4h0.59v0.59h-0.59zM2.3 10.0h0.59v0.59h-0.59zM4.1 10.0h0.59v0.59h-0.59zM5.2 10.0h0.59v0.59h-0.59zM5.8 10.0h0.59v0.59h-0.59zM6.4 10.0h0.59v0.59h-0.59zM7.0 10.0h0.59v0.59h-0.59zM7.6 10.0h0.59v0.59h-0.59zM8.2 10.0h0.59v0.59h-0.59zM8.8 10.0h0.59v0.59h-0.59zM9.4 10.0h0.59v0.59h-0.59zM10.0 10.0h0.59v0.59h-0.59zM11.2 10.0h0.59v0.59h-0.59zM12.9 10.0h0.59v0.59h-0.59zM15.3 10.0h0.59v0.59h-0.59zM15.9 10.0h0.59v0.59h-0.59zM16.5 10.0h0.59v0.59h-0.59zM18.3 10.0h0.59v0.59h-0.59zM18.8 10.0h0.59v0.59h-0.59zM19.4 10.0h0.59v0.59h-0.59zM20.0 10.0h0.59v0.59h-0.59zM20.6 10.0h0.59v0.59h-0.59zM21.8 10.0h0.59v0.59h-0.59zM23.0 10.0h0.59v0.59h-0.59zM23.6 10.0h0.59v0.59h-0.59zM24.2 10.0h0.59v0.59h-0.59zM24.8 10.0h0.59v0.59h-0.59zM25.3 10.0h0.59v0.59h-0.59zM2.9 10.6h0.59v0.59h-0.59zM4.1 10.6h0.59v0.59h-0.59zM5.2 10.6h0.59v0.59h-0.59zM7.0 10.6h0.59v0.59h-0.59zM7.6 10.6h0.59v0.59h-0.59zM8.8 10.6h0.59v0.59h-0.59zM9.4 10.6h0.59v0.59h-0.59zM10.0 10.6h0.59v0.59h-0.59zM10.6 10.6h0.59v0.59h-0.59zM12.3 10.6h0.59v0.59h-0.59zM13.5 10.6h0.59v0.59h-0.59zM14.1 10.6h0.59v0.59h-0.59zM14.7 10.6h0.59v0.59h-0.59zM15.3 10.6h0.59v0.59h-0.59zM15.9 10.6h0.59v0.59h-0.59zM16.5 10.6h0.59v0.59h-0.59zM17.7 10.6h0.59v0.59h-0.59zM18.3 10.6h0.59v0.59h-0.59zM20.0 10.6h0.59v0.59h-0.59zM20.6 10.6h0.59v0.59h-0.59zM21.2 10.6h0.59v0.59h-0.59zM21.8 10.6h0.59v0.59h-0.59zM22.4 10.6h0.59v0.59h-0.59zM23.0 10.6h0.59v0.59h-0.59zM23.6 10.6h0.59v0.59h-0.59zM24.2 10.6h0.59v0.59h-0.59zM26.5 10.6h0.59v0.59h-0.59zM27.1 10.6h0.59v0.59h-0.59zM27.7 10.6h0.59v0.59h-0.59zM1.7 11.2h0.59v0.59h-0.59zM2.3 11.2h0.59v0.59h-0.59zM2.9 11.2h0.59v0.59h-0.59zM3.5 11.2h0.59v0.59h-0.59zM4.7 11.2h0.59v0.59h-0.59zM5.2 11.2h0.59v0.59h-0.59zM7.0 11.2h0.59v0.59h-0.59zM7.6 11.2h0.59v0.59h-0.59zM8.2 11.2h0.59v0.59h-0.59zM8.8 11.2h0.59v0.59h-0.59zM9.4 11.2h0.59v0.59h-0.59zM11.7 11.2h0.59v0.59h-0.59zM12.3 11.2h0.59v0.59h-0.59zM14.1 11.2h0.59v0.59h-0.59zM15.3 11.2h0.59v0.59h-0.59zM15.9 11.2h0.59v0.59h-0.59zM18.8 11.2h0.59v0.59h-0.59zM19.4 11.2h0.59v0.59h-0.59zM20.0 11.2h0.59v0.59h-0.59zM20.6 11.2h0.59v0.59h-0.59zM24.2 11.2h0.59v0.59h-0.59zM24.8 11.2h0.59v0.59h-0.59zM25.3 11.2h0.59v0.59h-0.59zM26.5 11.2h0.59v0.59h-0.59zM1.7 11.7h0.59v0.59h-0.59zM2.3 11.7h0.59v0.59h-0.59zM2.9 11.7h0.59v0.59h-0.59zM4.7 11.7h0.59v0.59h-0.59zM5.2 11.7h0.59v0.59h-0.59zM5.8 11.7h0.59v0.59h-0.59zM7.0 11.7h0.59v0.59h-0.59zM7.6 11.7h0.59v0.59h-0.59zM8.8 11.7h0.59v0.59h-0.59zM9.4 11.7h0.59v0.59h-0.59zM10.0 11.7h0.59v0.59h-0.59zM12.3 11.7h0.59v0.59h-0.59zM12.9 11.7h0.59v0.59h-0.59zM13.5 11.7h0.59v0.59h-0.59zM15.3 11.7h0.59v0.59h-0.59zM15.9 11.7h0.59v0.59h-0.59zM16.5 11.7h0.59v0.59h-0.59zM17.7 11.7h0.59v0.59h-0.59zM18.3 11.7h0.59v0.59h-0.59zM20.0 11.7h0.59v0.59h-0.59zM20.6 11.7h0.59v0.59h-0.59zM21.2 11.7h0.59v0.59h-0.59zM21.8 11.7h0.59v0.59h-0.59zM23.0 11.7h0.59v0.59h-0.59zM24.8 11.7h0.59v0.59h-0.59zM25.3 11.7h0.59v0.59h-0.59zM26.5 11.7h0.59v0.59h-0.59zM27.7 11.7h0.59v0.59h-0.59zM1.7 12.3h0.59v0.59h-0.59zM2.9 12.3h0.59v0.59h-0.59zM4.1 12.3h0.59v0.59h-0.59zM4.7 12.3h0.59v0.59h-0.59zM5.2 12.3h0.59v0.59h-0.59zM5.8 12.3h0.59v0.59h-0.59zM7.6 12.3h0.59v0.59h-0.59zM8.2 12.3h0.59v0.59h-0.59zM8.8 12.3h0.59v0.59h-0.59zM10.0 12.3h0.59v0.59h-0.59zM10.6 12.3h0.59v0.59h-0.59zM11.2 12.3h0.59v0.59h-0.59zM11.7 12.3h0.59v0.59h-0.59zM15.3 12.3h0.59v0.59h-0.59zM15.9 12.3h0.59v0.59h-0.59zM17.7 12.3h0.59v0.59h-0.59zM18.8 12.3h0.59v0.59h-0.59zM19.4 12.3h0.59v0.59h-0.59zM20.0 12.3h0.59v0.59h-0.59zM20.6 12.3h0.59v0.59h-0.59zM21.2 12.3h0.59v0.59h-0.59zM21.8 12.3h0.59v0.59h-0.59zM22.4 12.3h0.59v0.59h-0.59zM23.6 12.3h0.59v0.59h-0.59zM24.8 12.3h0.59v0.59h-0.59zM25.3 12.3h0.59v0.59h-0.59zM27.1 12.3h0.59v0.59h-0.59zM27.7 12.3h0.59v0.59h-0.59zM1.7 12.9h0.59v0.59h-0.59zM2.3 12.9h0.59v0.59h-0.59zM3.5 12.9h0.59v0.59h-0.59zM4.1 12.9h0.59v0.59h-0.59zM5.2 12.9h0.59v0.59h-0.59zM5.8 12.9h0.59v0.59h-0.59zM7.6 12.9h0.59v0.59h-0.59zM8.2 12.9h0.59v0.59h-0.59zM8.8 12.9h0.59v0.59h-0.59zM10.0 12.9h0.59v0.59h-0.59zM11.7 12.9h0.59v0.59h-0.59zM12.3 12.9h0.59v0.59h-0.59zM14.1 12.9h0.59v0.59h-0.59zM15.3 12.9h0.59v0.59h-0.59zM15.9 12.9h0.59v0.59h-0.59zM16.5 12.9h0.59v0.59h-0.59zM19.4 12.9h0.59v0.59h-0.59zM20.0 12.9h0.59v0.59h-0.59zM20.6 12.9h0.59v0.59h-0.59zM22.4 12.9h0.59v0.59h-0.59zM23.0 12.9h0.59v0.59h-0.59zM23.6 12.9h0.59v0.59h-0.59zM24.2 12.9h0.59v0.59h-0.59zM25.3 12.9h0.59v0.59h-0.59zM2.3 13.5h0.59v0.59h-0.59zM2.9 13.5h0.59v0.59h-0.59zM3.5 13.5h0.59v0.59h-0.59zM4.7 13.5h0.59v0.59h-0.59zM5.2 13.5h0.59v0.59h-0.59zM6.4 13.5h0.59v0.59h-0.59zM7.0 13.5h0.59v0.59h-0.59zM7.6 13.5h0.59v0.59h-0.59zM8.2 13.5h0.59v0.59h-0.59zM8.8 13.5h0.59v0.59h-0.59zM11.2 13.5h0.59v0.59h-0.59zM11.7 13.5h0.59v0.59h-0.59zM12.3 13.5h0.59v0.59h-0.59zM12.9 13.5h0.59v0.59h-0.59zM14.1 13.5h0.59v0.59h-0.59zM14.7 13.5h0.59v0.59h-0.59zM15.3 13.5h0.59v0.59h-0.59zM18.8 13.5h0.59v0.59h-0.59zM20.0 13.5h0.59v0.59h-0.59zM21.2 13.5h0.59v0.59h-0.59zM22.4 13.5h0.59v0.59h-0.59zM23.0 13.5h0.59v0.59h-0.59zM23.6 13.5h0.59v0.59h-0.59zM24.2 13.5h0.59v0.59h-0.59zM25.9 13.5h0.59v0.59h-0.59zM26.5 13.5h0.59v0.59h-0.59zM27.7 13.5h0.59v0.59h-0.59zM1.7 14.1h0.59v0.59h-0.59zM4.1 14.1h0.59v0.59h-0.59zM4.7 14.1h0.59v0.59h-0.59zM7.0 14.1h0.59v0.59h-0.59zM7.6 14.1h0.59v0.59h-0.59zM8.2 14.1h0.59v0.59h-0.59zM8.8 14.1h0.59v0.59h-0.59zM11.2 14.1h0.59v0.59h-0.59zM12.3 14.1h0.59v0.59h-0.59zM12.9 14.1h0.59v0.59h-0.59zM14.7 14.1h0.59v0.59h-0.59zM16.5 14.1h0.59v0.59h-0.59zM17.1 14.1h0.59v0.59h-0.59zM17.7 14.1h0.59v0.59h-0.59zM18.3 14.1h0.59v0.59h-0.59zM18.8 14.1h0.59v0.59h-0.59zM20.6 14.1h0.59v0.59h-0.59zM21.2 14.1h0.59v0.59h-0.59zM21.8 14.1h0.59v0.59h-0.59zM23.0 14.1h0.59v0.59h-0.59zM23.6 14.1h0.59v0.59h-0.59zM24.2 14.1h0.59v0.59h-0.59zM25.3 14.1h0.59v0.59h-0.59zM25.9 14.1h0.59v0.59h-0.59zM26.5 14.1h0.59v0.59h-0.59zM27.1 14.1h0.59v0.59h-0.59zM27.7 14.1h0.59v0.59h-0.59zM2.3 14.7h0.59v0.59h-0.59zM2.9 14.7h0.59v0.59h-0.59zM4.1 14.7h0.59v0.59h-0.59zM4.7 14.7h0.59v0.59h-0.59zM5.2 14.7h0.59v0.59h-0.59zM6.4 14.7h0.59v0.59h-0.59zM7.6 14.7h0.59v0.59h-0.59zM8.2 14.7h0.59v0.59h-0.59zM10.0 14.7h0.59v0.59h-0.59zM10.6 14.7h0.59v0.59h-0.59zM11.7 14.7h0.59v0.59h-0.59zM12.3 14.7h0.59v0.59h-0.59zM13.5 14.7h0.59v0.59h-0.59zM14.7 14.7h0.59v0.59h-0.59zM15.9 14.7h0.59v0.59h-0.59zM16.5 14.7h0.59v0.59h-0.59zM17.1 14.7h0.59v0.59h-0.59zM17.7 14.7h0.59v0.59h-0.59zM19.4 14.7h0.59v0.59h-0.59zM20.6 14.7h0.59v0.59h-0.59zM21.2 14.7h0.59v0.59h-0.59zM21.8 14.7h0.59v0.59h-0.59zM22.4 14.7h0.59v0.59h-0.59zM23.0 14.7h0.59v0.59h-0.59zM24.2 14.7h0.59v0.59h-0.59zM24.8 14.7h0.59v0.59h-0.59zM26.5 14.7h0.59v0.59h-0.59zM27.1 14.7h0.59v0.59h-0.59zM2.3 15.3h0.59v0.59h-0.59zM2.9 15.3h0.59v0.59h-0.59zM4.1 15.3h0.59v0.59h-0.59zM6.4 15.3h0.59v0.59h-0.59zM7.6 15.3h0.59v0.59h-0.59zM8.2 15.3h0.59v0.59h-0.59zM10.0 15.3h0.59v0.59h-0.59zM10.6 15.3h0.59v0.59h-0.59zM11.2 15.3h0.59v0.59h-0.59zM11.7 15.3h0.59v0.59h-0.59zM12.3 15.3h0.59v0.59h-0.59zM12.9 15.3h0.59v0.59h-0.59zM13.5 15.3h0.59v0.59h-0.59zM15.3 15.3h0.59v0.59h-0.59zM17.1 15.3h0.59v0.59h-0.59zM18.3 15.3h0.59v0.59h-0.59zM19.4 15.3h0.59v0.59h-0.59zM20.6 15.3h0.59v0.59h-0.59zM21.2 15.3h0.59v0.59h-0.59zM22.4 15.3h0.59v0.59h-0.59zM23.6 15.3h0.59v0.59h-0.59zM24.2 15.3h0.59v0.59h-0.59zM24.8 15.3h0.59v0.59h-0.59zM25.9 15.3h0.59v0.59h-0.59zM26.5 15.3h0.59v0.59h-0.59zM1.7 15.9h0.59v0.59h-0.59zM2.3 15.9h0.59v0.59h-0.59zM2.9 15.9h0.59v0.59h-0.59zM3.5 15.9h0.59v0.59h-0.59zM4.1 15.9h0.59v0.59h-0.59zM4.7 15.9h0.59v0.59h-0.59zM5.2 15.9h0.59v0.59h-0.59zM5.8 15.9h0.59v0.59h-0.59zM6.4 15.9h0.59v0.59h-0.59zM7.0 15.9h0.59v0.59h-0.59zM8.2 15.9h0.59v0.59h-0.59zM10.0 15.9h0.59v0.59h-0.59zM10.6 15.9h0.59v0.59h-0.59zM11.2 15.9h0.59v0.59h-0.59zM11.7 15.9h0.59v0.59h-0.59zM12.9 15.9h0.59v0.59h-0.59zM15.9 15.9h0.59v0.59h-0.59zM17.1 15.9h0.59v0.59h-0.59zM18.8 15.9h0.59v0.59h-0.59zM20.6 15.9h0.59v0.59h-0.59zM21.2 15.9h0.59v0.59h-0.59zM22.4 15.9h0.59v0.59h-0.59zM23.6 15.9h0.59v0.59h-0.59zM24.8 15.9h0.59v0.59h-0.59zM25.3 15.9h0.59v0.59h-0.59zM26.5 15.9h0.59v0.59h-0.59zM27.1 15.9h0.59v0.59h-0.59zM27.7 15.9h0.59v0.59h-0.59zM1.7 16.5h0.59v0.59h-0.59zM2.3 16.5h0.59v0.59h-0.59zM2.9 16.5h0.59v0.59h-0.59zM3.5 16.5h0.59v0.59h-0.59zM5.8 16.5h0.59v0.59h-0.59zM7.0 16.5h0.59v0.59h-0.59zM7.6 16.5h0.59v0.59h-0.59zM8.8 16.5h0.59v0.59h-0.59zM10.0 16.5h0.59v0.59h-0.59zM11.7 16.5h0.59v0.59h-0.59zM13.5 16.5h0.59v0.59h-0.59zM14.7 16.5h0.59v0.59h-0.59zM16.5 16.5h0.59v0.59h-0.59zM17.7 16.5h0.59v0.59h-0.59zM18.3 16.5h0.59v0.59h-0.59zM19.4 16.5h0.59v0.59h-0.59zM20.6 16.5h0.59v0.59h-0.59zM23.6 16.5h0.59v0.59h-0.59zM24.2 16.5h0.59v0.59h-0.59zM24.8 16.5h0.59v0.59h-0.59zM25.3 16.5h0.59v0.59h-0.59zM26.5 16.5h0.59v0.59h-0.59zM27.1 16.5h0.59v0.59h-0.59zM1.7 17.1h0.59v0.59h-0.59zM2.3 17.1h0.59v0.59h-0.59zM3.5 17.1h0.59v0.59h-0.59zM4.1 17.1h0.59v0.59h-0.59zM4.7 17.1h0.59v0.59h-0.59zM5.2 17.1h0.59v0.59h-0.59zM5.8 17.1h0.59v0.59h-0.59zM6.4 17.1h0.59v0.59h-0.59zM8.2 17.1h0.59v0.59h-0.59zM9.4 17.1h0.59v0.59h-0.59zM10.0 17.1h0.59v0.59h-0.59zM11.2 17.1h0.59v0.59h-0.59zM11.7 17.1h0.59v0.59h-0.59zM12.3 17.1h0.59v0.59h-0.59zM14.7 17.1h0.59v0.59h-0.59zM15.3 17.1h0.59v0.59h-0.59zM15.9 17.1h0.59v0.59h-0.59zM17.7 17.1h0.59v0.59h-0.59zM18.8 17.1h0.59v0.59h-0.59zM20.6 17.1h0.59v0.59h-0.59zM21.8 17.1h0.59v0.59h-0.59zM22.4 17.1h0.59v0.59h-0.59zM23.0 17.1h0.59v0.59h-0.59zM23.6 17.1h0.59v0.59h-0.59zM24.2 17.1h0.59v0.59h-0.59zM25.3 17.1h0.59v0.59h-0.59zM25.9 17.1h0.59v0.59h-0.59zM27.1 17.1h0.59v0.59h-0.59zM27.7 17.1h0.59v0.59h-0.59zM2.3 17.7h0.59v0.59h-0.59zM4.1 17.7h0.59v0.59h-0.59zM4.7 17.7h0.59v0.59h-0.59zM5.2 17.7h0.59v0.59h-0.59zM5.8 17.7h0.59v0.59h-0.59zM8.2 17.7h0.59v0.59h-0.59zM10.0 17.7h0.59v0.59h-0.59zM11.2 17.7h0.59v0.59h-0.59zM11.7 17.7h0.59v0.59h-0.59zM12.3 17.7h0.59v0.59h-0.59zM12.9 17.7h0.59v0.59h-0.59zM13.5 17.7h0.59v0.59h-0.59zM14.1 17.7h0.59v0.59h-0.59zM17.1 17.7h0.59v0.59h-0.59zM17.7 17.7h0.59v0.59h-0.59zM18.3 17.7h0.59v0.59h-0.59zM19.4 17.7h0.59v0.59h-0.59zM20.0 17.7h0.59v0.59h-0.59zM21.8 17.7h0.59v0.59h-0.59zM23.0 17.7h0.59v0.59h-0.59zM23.6 17.7h0.59v0.59h-0.59zM24.2 17.7h0.59v0.59h-0.59zM26.5 17.7h0.59v0.59h-0.59zM27.7 17.7h0.59v0.59h-0.59zM1.7 18.3h0.59v0.59h-0.59zM5.2 18.3h0.59v0.59h-0.59zM7.6 18.3h0.59v0.59h-0.59zM9.4 18.3h0.59v0.59h-0.59zM10.0 18.3h0.59v0.59h-0.59zM11.2 18.3h0.59v0.59h-0.59zM12.3 18.3h0.59v0.59h-0.59zM12.9 18.3h0.59v0.59h-0.59zM13.5 18.3h0.59v0.59h-0.59zM14.7 18.3h0.59v0.59h-0.59zM15.3 18.3h0.59v0.59h-0.59zM15.9 18.3h0.59v0.59h-0.59zM16.5 18.3h0.59v0.59h-0.59zM19.4 18.3h0.59v0.59h-0.59zM20.6 18.3h0.59v0.59h-0.59zM23.0 18.3h0.59v0.59h-0.59zM25.3 18.3h0.59v0.59h-0.59zM25.9 18.3h0.59v0.59h-0.59zM26.5 18.3h0.59v0.59h-0.59zM27.1 18.3h0.59v0.59h-0.59zM4.1 18.8h0.59v0.59h-0.59zM4.7 18.8h0.59v0.59h-0.59zM5.2 18.8h0.59v0.59h-0.59zM6.4 18.8h0.59v0.59h-0.59zM7.0 18.8h0.59v0.59h-0.59zM7.6 18.8h0.59v0.59h-0.59zM8.2 18.8h0.59v0.59h-0.59zM8.8 18.8h0.59v0.59h-0.59zM9.4 18.8h0.59v0.59h-0.59zM10.6 18.8h0.59v0.59h-0.59zM11.2 18.8h0.59v0.59h-0.59zM12.3 18.8h0.59v0.59h-0.59zM14.1 18.8h0.59v0.59h-0.59zM14.7 18.8h0.59v0.59h-0.59zM15.3 18.8h0.59v0.59h-0.59zM16.5 18.8h0.59v0.59h-0.59zM17.7 18.8h0.59v0.59h-0.59zM18.3 18.8h0.59v0.59h-0.59zM19.4 18.8h0.59v0.59h-0.59zM20.6 18.8h0.59v0.59h-0.59zM21.2 18.8h0.59v0.59h-0.59zM21.8 18.8h0.59v0.59h-0.59zM23.6 18.8h0.59v0.59h-0.59zM24.2 18.8h0.59v0.59h-0.59zM24.8 18.8h0.59v0.59h-0.59zM25.9 18.8h0.59v0.59h-0.59zM26.5 18.8h0.59v0.59h-0.59zM27.1 18.8h0.59v0.59h-0.59zM1.7 19.4h0.59v0.59h-0.59zM2.9 19.4h0.59v0.59h-0.59zM3.5 19.4h0.59v0.59h-0.59zM4.7 19.4h0.59v0.59h-0.59zM5.2 19.4h0.59v0.59h-0.59zM6.4 19.4h0.59v0.59h-0.59zM9.4 19.4h0.59v0.59h-0.59zM10.0 19.4h0.59v0.59h-0.59zM10.6 19.4h0.59v0.59h-0.59zM11.7 19.4h0.59v0.59h-0.59zM12.9 19.4h0.59v0.59h-0.59zM13.5 19.4h0.59v0.59h-0.59zM14.1 19.4h0.59v0.59h-0.59zM15.3 19.4h0.59v0.59h-0.59zM15.9 19.4h0.59v0.59h-0.59zM17.1 19.4h0.59v0.59h-0.59zM17.7 19.4h0.59v0.59h-0.59zM18.3 19.4h0.59v0.59h-0.59zM20.6 19.4h0.59v0.59h-0.59zM21.2 19.4h0.59v0.59h-0.59zM21.8 19.4h0.59v0.59h-0.59zM24.2 19.4h0.59v0.59h-0.59zM24.8 19.4h0.59v0.59h-0.59zM26.5 19.4h0.59v0.59h-0.59zM27.1 19.4h0.59v0.59h-0.59zM1.7 20.0h0.59v0.59h-0.59zM2.3 20.0h0.59v0.59h-0.59zM2.9 20.0h0.59v0.59h-0.59zM4.7 20.0h0.59v0.59h-0.59zM5.2 20.0h0.59v0.59h-0.59zM5.8 20.0h0.59v0.59h-0.59zM6.4 20.0h0.59v0.59h-0.59zM7.0 20.0h0.59v0.59h-0.59zM7.6 20.0h0.59v0.59h-0.59zM8.2 20.0h0.59v0.59h-0.59zM8.8 20.0h0.59v0.59h-0.59zM10.6 20.0h0.59v0.59h-0.59zM11.7 20.0h0.59v0.59h-0.59zM12.3 20.0h0.59v0.59h-0.59zM14.7 20.0h0.59v0.59h-0.59zM15.3 20.0h0.59v0.59h-0.59zM16.5 20.0h0.59v0.59h-0.59zM17.1 20.0h0.59v0.59h-0.59zM17.7 20.0h0.59v0.59h-0.59zM18.3 20.0h0.59v0.59h-0.59zM18.8 20.0h0.59v0.59h-0.59zM20.6 20.0h0.59v0.59h-0.59zM21.8 20.0h0.59v0.59h-0.59zM22.4 20.0h0.59v0.59h-0.59zM23.6 20.0h0.59v0.59h-0.59zM25.3 20.0h0.59v0.59h-0.59zM27.1 20.0h0.59v0.59h-0.59zM27.7 20.0h0.59v0.59h-0.59zM5.8 20.6h0.59v0.59h-0.59zM6.4 20.6h0.59v0.59h-0.59zM7.6 20.6h0.59v0.59h-0.59zM8.2 20.6h0.59v0.59h-0.59zM10.6 20.6h0.59v0.59h-0.59zM11.2 20.6h0.59v0.59h-0.59zM11.7 20.6h0.59v0.59h-0.59zM12.9 20.6h0.59v0.59h-0.59zM14.7 20.6h0.59v0.59h-0.59zM16.5 20.6h0.59v0.59h-0.59zM17.1 20.6h0.59v0.59h-0.59zM18.3 20.6h0.59v0.59h-0.59zM18.8 20.6h0.59v0.59h-0.59zM19.4 20.6h0.59v0.59h-0.59zM21.2 20.6h0.59v0.59h-0.59zM21.8 20.6h0.59v0.59h-0.59zM23.0 20.6h0.59v0.59h-0.59zM24.2 20.6h0.59v0.59h-0.59zM25.9 20.6h0.59v0.59h-0.59zM26.5 20.6h0.59v0.59h-0.59zM27.7 20.6h0.59v0.59h-0.59zM2.3 21.2h0.59v0.59h-0.59zM3.5 21.2h0.59v0.59h-0.59zM4.7 21.2h0.59v0.59h-0.59zM5.2 21.2h0.59v0.59h-0.59zM5.8 21.2h0.59v0.59h-0.59zM6.4 21.2h0.59v0.59h-0.59zM7.0 21.2h0.59v0.59h-0.59zM7.6 21.2h0.59v0.59h-0.59zM8.2 21.2h0.59v0.59h-0.59zM9.4 21.2h0.59v0.59h-0.59zM10.0 21.2h0.59v0.59h-0.59zM10.6 21.2h0.59v0.59h-0.59zM12.3 21.2h0.59v0.59h-0.59zM12.9 21.2h0.59v0.59h-0.59zM14.1 21.2h0.59v0.59h-0.59zM14.7 21.2h0.59v0.59h-0.59zM15.3 21.2h0.59v0.59h-0.59zM17.7 21.2h0.59v0.59h-0.59zM18.8 21.2h0.59v0.59h-0.59zM20.0 21.2h0.59v0.59h-0.59zM22.4 21.2h0.59v0.59h-0.59zM23.0 21.2h0.59v0.59h-0.59zM23.6 21.2h0.59v0.59h-0.59zM24.2 21.2h0.59v0.59h-0.59zM25.3 21.2h0.59v0.59h-0.59zM26.5 21.2h0.59v0.59h-0.59zM27.1 21.2h0.59v0.59h-0.59zM27.7 21.2h0.59v0.59h-0.59zM1.7 21.8h0.59v0.59h-0.59zM2.3 21.8h0.59v0.59h-0.59zM2.9 21.8h0.59v0.59h-0.59zM4.1 21.8h0.59v0.59h-0.59zM4.7 21.8h0.59v0.59h-0.59zM5.2 21.8h0.59v0.59h-0.59zM5.8 21.8h0.59v0.59h-0.59zM6.4 21.8h0.59v0.59h-0.59zM8.2 21.8h0.59v0.59h-0.59zM10.0 21.8h0.59v0.59h-0.59zM12.3 21.8h0.59v0.59h-0.59zM14.1 21.8h0.59v0.59h-0.59zM14.7 21.8h0.59v0.59h-0.59zM16.5 21.8h0.59v0.59h-0.59zM17.1 21.8h0.59v0.59h-0.59zM17.7 21.8h0.59v0.59h-0.59zM18.3 21.8h0.59v0.59h-0.59zM19.4 21.8h0.59v0.59h-0.59zM20.0 21.8h0.59v0.59h-0.59zM21.8 21.8h0.59v0.59h-0.59zM26.5 21.8h0.59v0.59h-0.59zM27.7 21.8h0.59v0.59h-0.59zM2.3 22.4h0.59v0.59h-0.59zM3.5 22.4h0.59v0.59h-0.59zM4.1 22.4h0.59v0.59h-0.59zM4.7 22.4h0.59v0.59h-0.59zM5.2 22.4h0.59v0.59h-0.59zM5.8 22.4h0.59v0.59h-0.59zM6.4 22.4h0.59v0.59h-0.59zM7.0 22.4h0.59v0.59h-0.59zM7.6 22.4h0.59v0.59h-0.59zM8.2 22.4h0.59v0.59h-0.59zM8.8 22.4h0.59v0.59h-0.59zM9.4 22.4h0.59v0.59h-0.59zM10.6 22.4h0.59v0.59h-0.59zM11.7 22.4h0.59v0.59h-0.59zM14.1 22.4h0.59v0.59h-0.59zM14.7 22.4h0.59v0.59h-0.59zM15.9 22.4h0.59v0.59h-0.59zM17.7 22.4h0.59v0.59h-0.59zM20.0 22.4h0.59v0.59h-0.59zM21.2 22.4h0.59v0.59h-0.59zM21.8 22.4h0.59v0.59h-0.59zM23.0 22.4h0.59v0.59h-0.59zM24.8 22.4h0.59v0.59h-0.59zM25.9 22.4h0.59v0.59h-0.59zM26.5 22.4h0.59v0.59h-0.59zM27.1 22.4h0.59v0.59h-0.59zM1.7 23.0h0.59v0.59h-0.59zM2.3 23.0h0.59v0.59h-0.59zM2.9 23.0h0.59v0.59h-0.59zM3.5 23.0h0.59v0.59h-0.59zM4.7 23.0h0.59v0.59h-0.59zM5.8 23.0h0.59v0.59h-0.59zM6.4 23.0h0.59v0.59h-0.59zM7.0 23.0h0.59v0.59h-0.59zM7.6 23.0h0.59v0.59h-0.59zM10.0 23.0h0.59v0.59h-0.59zM10.6 23.0h0.59v0.59h-0.59zM11.2 23.0h0.59v0.59h-0.59zM13.5 23.0h0.59v0.59h-0.59zM15.3 23.0h0.59v0.59h-0.59zM15.9 23.0h0.59v0.59h-0.59zM16.5 23.0h0.59v0.59h-0.59zM17.1 23.0h0.59v0.59h-0.59zM17.7 23.0h0.59v0.59h-0.59zM24.8 23.0h0.59v0.59h-0.59zM25.9 23.0h0.59v0.59h-0.59zM27.1 23.0h0.59v0.59h-0.59zM27.7 23.0h0.59v0.59h-0.59zM1.7 23.6h0.59v0.59h-0.59zM4.1 23.6h0.59v0.59h-0.59zM6.4 23.6h0.59v0.59h-0.59zM7.0 23.6h0.59v0.59h-0.59zM7.6 23.6h0.59v0.59h-0.59zM8.2 23.6h0.59v0.59h-0.59zM8.8 23.6h0.59v0.59h-0.59zM10.6 23.6h0.59v0.59h-0.59zM11.7 23.6h0.59v0.59h-0.59zM12.3 23.6h0.59v0.59h-0.59zM14.7 23.6h0.59v0.59h-0.59zM15.3 23.6h0.59v0.59h-0.59zM15.9 23.6h0.59v0.59h-0.59zM18.3 23.6h0.59v0.59h-0.59zM18.8 23.6h0.59v0.59h-0.59zM19.4 23.6h0.59v0.59h-0.59zM20.6 23.6h0.59v0.59h-0.59zM21.2 23.6h0.59v0.59h-0.59zM21.8 23.6h0.59v0.59h-0.59zM22.4 23.6h0.59v0.59h-0.59zM23.6 23.6h0.59v0.59h-0.59zM24.8 23.6h0.59v0.59h-0.59zM25.9 23.6h0.59v0.59h-0.59zM26.5 23.6h0.59v0.59h-0.59zM27.7 23.6h0.59v0.59h-0.59zM6.4 24.2h0.59v0.59h-0.59zM7.0 24.2h0.59v0.59h-0.59zM10.0 24.2h0.59v0.59h-0.59zM11.7 24.2h0.59v0.59h-0.59zM12.9 24.2h0.59v0.59h-0.59zM14.7 24.2h0.59v0.59h-0.59zM15.3 24.2h0.59v0.59h-0.59zM17.1 24.2h0.59v0.59h-0.59zM17.7 24.2h0.59v0.59h-0.59zM18.8 24.2h0.59v0.59h-0.59zM20.0 24.2h0.59v0.59h-0.59zM20.6 24.2h0.59v0.59h-0.59zM21.2 24.2h0.59v0.59h-0.59zM22.4 24.2h0.59v0.59h-0.59zM23.6 24.2h0.59v0.59h-0.59zM24.8 24.2h0.59v0.59h-0.59zM26.5 24.2h0.59v0.59h-0.59zM27.1 24.2h0.59v0.59h-0.59zM7.6 24.8h0.59v0.59h-0.59zM8.2 24.8h0.59v0.59h-0.59zM10.6 24.8h0.59v0.59h-0.59zM13.5 24.8h0.59v0.59h-0.59zM14.1 24.8h0.59v0.59h-0.59zM15.3 24.8h0.59v0.59h-0.59zM18.3 24.8h0.59v0.59h-0.59zM18.8 24.8h0.59v0.59h-0.59zM19.4 24.8h0.59v0.59h-0.59zM20.0 24.8h0.59v0.59h-0.59zM22.4 24.8h0.59v0.59h-0.59zM25.3 24.8h0.59v0.59h-0.59zM5.8 25.3h0.59v0.59h-0.59zM6.4 25.3h0.59v0.59h-0.59zM7.0 25.3h0.59v0.59h-0.59zM8.2 25.3h0.59v0.59h-0.59zM10.0 25.3h0.59v0.59h-0.59zM11.7 25.3h0.59v0.59h-0.59zM12.3 25.3h0.59v0.59h-0.59zM12.9 25.3h0.59v0.59h-0.59zM14.7 25.3h0.59v0.59h-0.59zM15.3 25.3h0.59v0.59h-0.59zM17.1 25.3h0.59v0.59h-0.59zM19.4 25.3h0.59v0.59h-0.59zM20.0 25.3h0.59v0.59h-0.59zM21.2 25.3h0.59v0.59h-0.59zM21.8 25.3h0.59v0.59h-0.59zM22.4 25.3h0.59v0.59h-0.59zM23.6 25.3h0.59v0.59h-0.59zM24.8 25.3h0.59v0.59h-0.59zM25.3 25.3h0.59v0.59h-0.59zM25.9 25.3h0.59v0.59h-0.59zM26.5 25.3h0.59v0.59h-0.59zM27.7 25.3h0.59v0.59h-0.59zM5.8 25.9h0.59v0.59h-0.59zM7.6 25.9h0.59v0.59h-0.59zM8.8 25.9h0.59v0.59h-0.59zM9.4 25.9h0.59v0.59h-0.59zM10.0 25.9h0.59v0.59h-0.59zM10.6 25.9h0.59v0.59h-0.59zM12.3 25.9h0.59v0.59h-0.59zM13.5 25.9h0.59v0.59h-0.59zM14.7 25.9h0.59v0.59h-0.59zM17.7 25.9h0.59v0.59h-0.59zM18.3 25.9h0.59v0.59h-0.59zM18.8 25.9h0.59v0.59h-0.59zM19.4 25.9h0.59v0.59h-0.59zM20.0 25.9h0.59v0.59h-0.59zM20.6 25.9h0.59v0.59h-0.59zM21.2 25.9h0.59v0.59h-0.59zM22.4 25.9h0.59v0.59h-0.59zM24.2 25.9h0.59v0.59h-0.59zM25.3 25.9h0.59v0.59h-0.59zM25.9 25.9h0.59v0.59h-0.59zM27.1 25.9h0.59v0.59h-0.59zM7.6 26.5h0.59v0.59h-0.59zM8.2 26.5h0.59v0.59h-0.59zM8.8 26.5h0.59v0.59h-0.59zM10.6 26.5h0.59v0.59h-0.59zM11.2 26.5h0.59v0.59h-0.59zM11.7 26.5h0.59v0.59h-0.59zM12.3 26.5h0.59v0.59h-0.59zM14.7 26.5h0.59v0.59h-0.59zM17.7 26.5h0.59v0.59h-0.59zM18.3 26.5h0.59v0.59h-0.59zM20.6 26.5h0.59v0.59h-0.59zM22.4 26.5h0.59v0.59h-0.59zM23.0 26.5h0.59v0.59h-0.59zM23.6 26.5h0.59v0.59h-0.59zM24.2 26.5h0.59v0.59h-0.59zM24.8 26.5h0.59v0.59h-0.59zM25.3 26.5h0.59v0.59h-0.59zM25.9 26.5h0.59v0.59h-0.59zM26.5 26.5h0.59v0.59h-0.59zM27.7 26.5h0.59v0.59h-0.59zM6.4 27.1h0.59v0.59h-0.59zM7.0 27.1h0.59v0.59h-0.59zM8.2 27.1h0.59v0.59h-0.59zM10.6 27.1h0.59v0.59h-0.59zM11.2 27.1h0.59v0.59h-0.59zM11.7 27.1h0.59v0.59h-0.59zM14.1 27.1h0.59v0.59h-0.59zM14.7 27.1h0.59v0.59h-0.59zM15.9 27.1h0.59v0.59h-0.59zM17.1 27.1h0.59v0.59h-0.59zM17.7 27.1h0.59v0.59h-0.59zM18.3 27.1h0.59v0.59h-0.59zM19.4 27.1h0.59v0.59h-0.59zM20.0 27.1h0.59v0.59h-0.59zM21.2 27.1h0.59v0.59h-0.59zM21.8 27.1h0.59v0.59h-0.59zM22.4 27.1h0.59v0.59h-0.59zM23.0 27.1h0.59v0.59h-0.59zM24.2 27.1h0.59v0.59h-0.59zM24.8 27.1h0.59v0.59h-0.59zM25.3 27.1h0.59v0.59h-0.59zM25.9 27.1h0.59v0.59h-0.59zM27.1 27.1h0.59v0.59h-0.59zM5.8 27.7h0.59v0.59h-0.59zM7.6 27.7h0.59v0.59h-0.59zM8.2 27.7h0.59v0.59h-0.59zM8.8 27.7h0.59v0.59h-0.59zM9.4 27.7h0.59v0.59h-0.59zM10.0 27.7h0.59v0.59h-0.59zM10.6 27.7h0.59v0.59h-0.59zM12.9 27.7h0.59v0.59h-0.59zM13.5 27.7h0.59v0.59h-0.59zM14.7 27.7h0.59v0.59h-0.59zM15.9 27.7h0.59v0.59h-0.59zM17.1 27.7h0.59v0.59h-0.59zM18.3 27.7h0.59v0.59h-0.59zM18.8 27.7h0.59v0.59h-0.59zM19.4 27.7h0.59v0.59h-0.59zM20.6 27.7h0.59v0.59h-0.59zM21.2 27.7h0.59v0.59h-0.59zM21.8 27.7h0.59v0.59h-0.59zM23.0 27.7h0.59v0.59h-0.59zM24.2 27.7h0.59v0.59h-0.59zM24.8 27.7h0.59v0.59h-0.59zM26.5 27.7h0.59v0.59h-0.59zM27.1 27.7h0.59v0.59h-0.59zM27.7 27.7h0.59v0.59h-0.59z" fill="#3a3a3a"/><rect x="1.70" y="1.70" width="4.14" height="4.14" fill="#444"/><rect x="2.29" y="2.29" width="2.96" height="2.96" fill="#f0f0f0"/><rect x="2.88" y="2.88" width="1.77" height="1.77" fill="#444"/><rect x="24.16" y="1.70" width="4.14" height="4.14" fill="#444"/><rect x="24.75" y="2.29" width="2.96" height="2.96" fill="#f0f0f0"/><rect x="25.34" y="2.88" width="1.77" height="1.77" fill="#444"/><rect x="1.70" y="24.16" width="4.14" height="4.14" fill="#444"/><rect x="2.29" y="24.75" width="2.96" height="2.96" fill="#f0f0f0"/><rect x="2.88" y="25.34" width="1.77" height="1.77" fill="#444"/></g></svg>
<span class="t" style="left:509.00px;top:221.60px;font-size:7.92px;color:#f0f0f0;letter-spacing:0.006px;transform:scaleY(1.1);transform-origin:0 6.00px;-webkit-text-stroke:0.04px #f0f0f0;">_ДемоРазделАнкетирование48.p</span>
<span class="t" style="left:509.00px;top:232.65px;font-size:8.09px;color:#f0f0f0;transform:scaleY(1.1);transform-origin:0 6.00px;-webkit-text-stroke:0.04px #f0f0f0;">ng</span>
<span class="t" style="left:509.00px;top:243.70px;font-size:7.66px;color:#cfcfcf;transform:scaleY(1.1);transform-origin:0 6.00px;-webkit-text-stroke:0.04px #cfcfcf;">Файл "PNG"</span>
<svg class="a" style="left:474px;top:220px;" width="30" height="30" viewBox="0 0 30 30"><g transform="translate(0.500 0.400) scale(0.9667 0.9667)"><rect x="0.5" y="0" width="29" height="29.5" fill="#161616"/><path d="M10.4 3.8L27.2 6.5L22.9 27.6L5.6 24.1Z" fill="#cfa163" stroke="#cfa163" stroke-width="1.2" stroke-linejoin="round"/><path d="M23.2 27.8L27.6 6.7" stroke="#8a6a3c" stroke-width="0.9" fill="none"/><path d="M11.5 5.2L26 7.5L22.2 26.2L7 23.1Z" fill="#f3f6fa"/><path d="M7 23.1L9.4 19.4L12.6 24.2Z" fill="#c3d5e6"/><path d="M20 9L25.4 10L24.4 15Z" fill="#e2ebf3"/><path d="M15.2 2.6L23 3.9L22.5 6.8L14.6 5.5Z" fill="#c4c4c4" stroke="#909090" stroke-width="0.5"/><circle cx="19.6" cy="2.4" r="1.4" fill="none" stroke="#b0b0b0" stroke-width="0.9"/><text x="0" y="0" transform="translate(11.6 20.4) skewX(-12) rotate(6)" font-family="Liberation Sans, sans-serif" font-size="14.5" font-weight="bold" fill="#4a9e2e">?</text></g></svg>
<span class="t" style="left:509.00px;top:260.60px;font-size:7.81px;color:#f0f0f0;transform:scaleY(1.1);transform-origin:0 6.00px;-webkit-text-stroke:0.04px #f0f0f0;">_ДемоРазделГлавное.png</span>
<span class="t" style="left:509.00px;top:271.65px;font-size:7.66px;color:#cfcfcf;transform:scaleY(1.1);transform-origin:0 6.00px;-webkit-text-stroke:0.04px #cfcfcf;">Файл "PNG"</span>
<span class="t" style="left:509.00px;top:282.70px;font-size:7.99px;color:#cfcfcf;transform:scaleY(1.1);transform-origin:0 6.00px;-webkit-text-stroke:0.04px #cfcfcf;">469 байт</span>
<svg class="a" style="left:474px;top:259px;" width="30" height="30" viewBox="0 0 30 30"><g transform="translate(0.500 0.400) scale(0.9667 0.9667)"><rect x="2.6" y="2.8" width="24" height="24" fill="#151515"/><rect x="3.5" y="3.9" width="21.2" height="2.5" fill="#3f3f3f"/><rect x="3.5" y="9.8" width="21.2" height="2.5" fill="#3f3f3f"/><rect x="3.5" y="15.6" width="21.2" height="2.5" fill="#3f3f3f"/><rect x="3.5" y="21.5" width="21.2" height="2.5" fill="#3f3f3f"/></g></svg>
<span class="t" style="left:509.00px;top:299.60px;font-size:7.95px;color:#f0f0f0;transform:scaleY(1.1);transform-origin:0 6.00px;-webkit-text-stroke:0.04px #f0f0f0;">_ДемоРазделИнтегрируемыеПод</span>
<span class="t" style="left:509.00px;top:310.65px;font-size:7.86px;color:#f0f0f0;transform:scaleY(1.1);transform-origin:0 6.00px;-webkit-text-stroke:0.04px #f0f0f0;">системы.png</span>
<span class="t" style="left:509.00px;top:321.70px;font-size:7.66px;color:#cfcfcf;transform:scaleY(1.1);transform-origin:0 6.00px;-webkit-text-stroke:0.04px #cfcfcf;">Файл "PNG"</span>
<svg class="a" style="left:474px;top:298px;" width="30" height="30" viewBox="0 0 30 30"><g transform="translate(0.500 0.400) scale(0.9667 0.9667)"><rect x="2.6" y="3.6" width="24.4" height="23.6" fill="#151515"/><rect x="3.5" y="4.5" width="6.4" height="6.2" rx="0.8" fill="#333"/><rect x="3.5" y="11.9" width="6.4" height="6.2" rx="0.8" fill="#3e3e3e"/><rect x="11" y="11.9" width="6.4" height="6.2" rx="0.8" fill="#363636"/><rect x="3.5" y="19.3" width="6.4" height="6.4" rx="0.8" fill="#444"/><rect x="11" y="19.3" width="6.4" height="6.4" rx="0.8" fill="#444"/><rect x="18.5" y="19.3" width="6.8" height="6.4" rx="0.8" fill="#444"/><rect x="5" y="20.8" width="3.4" height="3.4" fill="#242424"/><rect x="20.2" y="20.8" width="3.4" height="3.4" fill="#242424"/><rect x="12.8" y="21" width="2.8" height="3" fill="#383838"/></g></svg>
<span class="t" style="left:678.20px;top:182.60px;font-size:8.01px;color:#f0f0f0;letter-spacing:0.005px;transform:scaleY(1.1);transform-origin:0 6.00px;-webkit-text-stroke:0.04px #f0f0f0;">_ДемоЛоготипБСП.png</span>
<span class="t" style="left:678.20px;top:193.65px;font-size:7.8px;color:#cfcfcf;transform:scaleY(1.1);transform-origin:0 6.00px;-webkit-text-stroke:0.04px #cfcfcf;">Файл "PNG"</span>
<span class="t" style="left:678.20px;top:204.70px;font-size:7.74px;color:#cfcfcf;transform:scaleY(1.1);transform-origin:0 6.00px;-webkit-text-stroke:0.04px #cfcfcf;">3,58 КБ</span>
<svg class="a" style="left:644px;top:181px;" width="30" height="30" viewBox="0 0 30 30"><g transform="translate(0.500 0.400) scale(0.9667 0.9667)"><rect x="0.7" y="1.3" width="28.3" height="27" rx="4" fill="#1b1a17" stroke="#8e6a34" stroke-width="1.35"/><g fill="none" stroke="#c4952f" stroke-width="0.75"><rect x="6" y="12.4" width="5" height="5"/><rect x="10.6" y="10" width="5.4" height="5.4"/><rect x="8.4" y="16.6" width="5" height="5.2"/><rect x="13.2" y="14.4" width="4.6" height="4.6"/></g><g stroke="#86b458" stroke-width="0.5"><rect x="4.6" y="6.6" width="4.6" height="4.6" rx="1" fill="#6c9c42"/><rect x="6.9" y="8.8" width="4.4" height="4.6" rx="1" fill="#5f8e3a"/><rect x="16.8" y="12" width="4" height="4.2" rx="1" fill="#6c9c42"/><rect x="19.4" y="14.2" width="4.2" height="4.6" rx="1" fill="#5f8e3a"/><rect x="11" y="19.6" width="4.2" height="5" rx="1" fill="#6c9c42"/><rect x="15.4" y="19" width="4" height="5.6" rx="1" fill="#5f8e3a"/><rect x="19.6" y="19.8" width="4" height="4.8" rx="1" fill="#6c9c42"/></g></g></svg>
<span class="t" style="left:678.20px;top:221.60px;font-size:7.9px;color:#f0f0f0;transform:scaleY(1.1);transform-origin:0 6.00px;-webkit-text-stroke:0.04px #f0f0f0;">_ДемоРазделБизнесПроцессыИЗ</span>
<span class="t" style="left:678.20px;top:232.65px;font-size:8.04px;color:#f0f0f0;letter-spacing:0.006px;transform:scaleY(1.1);transform-origin:0 6.00px;-webkit-text-stroke:0.04px #f0f0f0;">адачи.png</span>
<span class="t" style="left:678.20px;top:243.70px;font-size:7.8px;color:#cfcfcf;transform:scaleY(1.1);transform-origin:0 6.00px;-webkit-text-stroke:0.04px #cfcfcf;">Файл "PNG"</span>
<svg class="a" style="left:644px;top:220px;" width="30" height="30" viewBox="0 0 30 30"><g transform="translate(0.500 0.400) scale(0.9667 0.9667)"><rect x="0.8" y="2" width="26.4" height="25" fill="#151515"/><circle cx="19.4" cy="7.2" r="2.7" fill="#3c3c3c"/><path d="M13.2 17.6V14.4Q13.2 10.6 17 10.6H21.8Q25.7 10.6 25.7 14.4V17.6Z" fill="#3c3c3c"/><circle cx="8.2" cy="14.2" r="2.7" fill="#4a4a4a"/><path d="M1.4 25.6V22.2Q1.4 18.4 5.2 18.4H11.2Q15 18.4 15 22.2V25.6Z" fill="#4a4a4a"/></g></svg>
<span class="t" style="left:678.20px;top:260.60px;font-size:7.88px;color:#f0f0f0;transform:scaleY(1.1);transform-origin:0 6.00px;-webkit-text-stroke:0.04px #f0f0f0;">_ДемоРазделИнструментыРазраб</span>
<span class="t" style="left:678.20px;top:271.65px;font-size:8.2px;color:#f0f0f0;letter-spacing:0.008px;transform:scaleY(1.1);transform-origin:0 6.00px;-webkit-text-stroke:0.04px #f0f0f0;">отчика.png</span>
<span class="t" style="left:678.20px;top:282.70px;font-size:7.8px;color:#cfcfcf;transform:scaleY(1.1);transform-origin:0 6.00px;-webkit-text-stroke:0.04px #cfcfcf;">Файл "PNG"</span>
<svg class="a" style="left:644px;top:259px;" width="30" height="30" viewBox="0 0 30 30"><g transform="translate(0.500 0.400) scale(0.9667 0.9667)"><rect x="2.6" y="2.4" width="24" height="22.6" fill="#151515"/><path d="M21.6 3.2Q17.6 2.6 15.6 5.4Q14.2 7.6 15 10.2L4.2 19.6Q2.8 21.2 4.2 22.8Q5.8 24.2 7.4 22.8L17.4 12.6Q20 13.6 22.4 12.2Q25 10.4 24.6 6.6L21.4 9.6L18.6 9L18.2 6.4Z" fill="#4a4a4a"/><circle cx="5.8" cy="21.2" r="0.9" fill="#1a1a1a"/></g></svg>
<span class="t" style="left:678.20px;top:299.60px;font-size:8.0px;color:#f0f0f0;transform:scaleY(1.1);transform-origin:0 6.00px;-webkit-text-stroke:0.04px #f0f0f0;">_ДемоРазделИнтегрируемыеПод</span>
<span class="t" style="left:678.20px;top:310.65px;font-size:7.94px;color:#f0f0f0;transform:scaleY(1.1);transform-origin:0 6.00px;-webkit-text-stroke:0.04px #f0f0f0;">системы48.png</span>
<span class="t" style="left:678.20px;top:321.70px;font-size:7.8px;color:#cfcfcf;transform:scaleY(1.1);transform-origin:0 6.00px;-webkit-text-stroke:0.04px #cfcfcf;">Файл "PNG"</span>
<svg class="a" style="left:644px;top:298px;" width="30" height="30" viewBox="0 0 30 30"><g transform="translate(0.500 0.400) scale(0.9667 0.9667)"><rect x="0" y="0.5" width="30" height="29" fill="#333"/><path d="M8 4L13.5 2L19 4V11L13.5 13L8 11Z" fill="#94b2cc"/><path d="M13.5 2L19 4L13.5 6L8 4Z" fill="#c4d8e8"/><path d="M13.5 6L19 4V11L13.5 13Z" fill="#7698b8"/><path d="M13.5 8L20 5.5L27 8.5V21.5L20.5 25L13.5 21.5Z" fill="#52963e"/><path d="M13.5 8L20 5.5L27 8.5L20.5 11.5Z" fill="#90c670"/><path d="M20.5 11.5L27 8.5V21.5L20.5 25Z" fill="#417f30"/><path d="M15.5 13H26.5M15.5 17.5H26.5M17 9.5V23M23.8 10V23.5" stroke="#b6e09c" stroke-width="0.5" opacity=".8"/><path d="M1.6 11.4L7.4 9.4L13.4 11.8V17.4L19.6 20V25.4L12.6 28L1.6 23.6Z" fill="#c9ae5c"/><path d="M1.6 11.4L7.4 9.4L13.4 11.8L7.6 14Z" fill="#ece0a8"/><path d="M7.6 14L13.4 11.8V17.4L7.6 19.6Z" fill="#ad9040"/><path d="M7.6 19.6L13.4 17.4L19.6 20L13 22.6Z" fill="#e8d898"/><path d="M13 22.6L19.6 20V25.4L12.6 28Z" fill="#a48638"/><path d="M1.6 17.4L7.6 19.6M7.6 14V25.8" stroke="#b89a44" stroke-width="0.5"/></g></svg>
<span class="t" style="left:848.00px;top:182.60px;font-size:7.97px;color:#f0f0f0;transform:scaleY(1.1);transform-origin:0 6.00px;-webkit-text-stroke:0.04px #f0f0f0;">_ДемоРазделАнкетирование.png</span>
<span class="t" style="left:848.00px;top:193.65px;font-size:7.71px;color:#cfcfcf;transform:scaleY(1.1);transform-origin:0 6.00px;-webkit-text-stroke:0.04px #cfcfcf;">Файл "PNG"</span>
<span class="t" style="left:848.00px;top:204.70px;font-size:8.06px;color:#cfcfcf;letter-spacing:0.006px;transform:scaleY(1.1);transform-origin:0 6.00px;-webkit-text-stroke:0.04px #cfcfcf;">498 байт</span>
<svg class="a" style="left:814px;top:181px;" width="29" height="30" viewBox="0 0 29 30"><g transform="translate(0.000 0.400) scale(0.9667 0.9667)"><rect x="2.4" y="2" width="24" height="24.6" fill="#151515"/><circle cx="13.8" cy="13.9" r="10.5" fill="#414141"/><text x="13.8" y="20.2" font-family="Liberation Sans, sans-serif" font-size="17.5" font-weight="bold" fill="#1b1b1b" text-anchor="middle">?</text></g></svg>
<span class="t" style="left:848.00px;top:221.60px;font-size:7.87px;color:#f0f0f0;transform:scaleY(1.1);transform-origin:0 6.00px;-webkit-text-stroke:0.04px #f0f0f0;">_ДемоРазделБизнесПроцессыИЗ</span>
<span class="t" style="left:848.00px;top:232.65px;font-size:7.97px;color:#f0f0f0;transform:scaleY(1.1);transform-origin:0 6.00px;-webkit-text-stroke:0.04px #f0f0f0;">адачи48.png</span>
<span class="t" style="left:848.00px;top:243.70px;font-size:7.71px;color:#cfcfcf;transform:scaleY(1.1);transform-origin:0 6.00px;-webkit-text-stroke:0.04px #cfcfcf;">Файл "PNG"</span>
<svg class="a" style="left:814px;top:220px;" width="29" height="30" viewBox="0 0 29 30"><g transform="translate(0.000 0.400) scale(0.9667 0.9667)"><rect x="0" y="2" width="29" height="26" fill="#161616"/><circle cx="7.7" cy="7.4" r="3.1" fill="#e8b88e"/><path d="M4.4 7Q4.2 3 7.8 3.2Q11.4 3 11 7Q9 5 4.4 7Z" fill="#a06a2c"/><path d="M0.5 21V15.6Q0.5 10.8 5.4 10.8H9.4Q13.8 10.8 13.8 15.6V21Z" fill="#2b8aa8"/><path d="M6.2 10.8L7.5 17.6L8.8 10.8Z" fill="#e6f2ea"/><path d="M7.1 12L7.5 17.4L7.9 12Z" fill="#3a9a40"/><circle cx="18.6" cy="9.8" r="3.3" fill="#e2b28c"/><path d="M15.2 9.4Q14.8 5.2 18.6 5.4Q22.6 5.2 22 9.4Q20 7.4 15.2 9.4Z" fill="#333"/><path d="M12 26.5V19.4Q12 14.6 16.6 14.6H22Q28 14.6 28 19.4V26.5Z" fill="#948a80"/><path d="M16.8 14.6L18.6 22L20.4 14.6Z" fill="#f4f4f4"/><path d="M18.2 16L17.8 24L18.6 25.6L19.4 24L19 16Z" fill="#c4242a"/></g></svg>
<span class="t" style="left:848.00px;top:260.60px;font-size:7.85px;color:#f0f0f0;transform:scaleY(1.1);transform-origin:0 6.00px;-webkit-text-stroke:0.04px #f0f0f0;">_ДемоРазделИнструментыРазраб</span>
<span class="t" style="left:848.00px;top:271.65px;font-size:8.02px;color:#f0f0f0;transform:scaleY(1.1);transform-origin:0 6.00px;-webkit-text-stroke:0.04px #f0f0f0;">отчика48.png</span>
<span class="t" style="left:848.00px;top:282.70px;font-size:7.71px;color:#cfcfcf;transform:scaleY(1.1);transform-origin:0 6.00px;-webkit-text-stroke:0.04px #cfcfcf;">Файл "PNG"</span>
<svg class="a" style="left:814px;top:259px;" width="29" height="30" viewBox="0 0 29 30"><g transform="translate(0.000 0.400) scale(0.9667 0.9667)"><rect x="2.4" y="2.6" width="25" height="25" fill="#161616"/><g transform="translate(14.7 14.9) scale(0.84)"><g fill="#c4c8ce"><rect x="-2.6" y="-12" width="5.2" height="24" rx="1"/><rect x="-2.6" y="-12" width="5.2" height="24" rx="1" transform="rotate(36)"/><rect x="-2.6" y="-12" width="5.2" height="24" rx="1" transform="rotate(72)"/><rect x="-2.6" y="-12" width="5.2" height="24" rx="1" transform="rotate(108)"/><rect x="-2.6" y="-12" width="5.2" height="24" rx="1" transform="rotate(144)"/></g><circle r="9.4" fill="#d2d6dc"/><path d="M3 -9Q10 -4 8.6 4Q6 9 0 9.4Q8 6 6 -2Q5 -6 3 -9Z" fill="#a4aab2"/><circle cx="-2.4" cy="-0.8" r="4.6" fill="#7e848c"/><circle cx="-3.2" cy="-1" r="3" fill="#b8bcc4"/></g></g></svg>
<span class="t" style="left:848.00px;top:299.60px;font-size:8.02px;color:#f0f0f0;transform:scaleY(1.1);transform-origin:0 6.00px;-webkit-text-stroke:0.04px #f0f0f0;">_ДемоРазделНормативноСправо</span>
<span class="t" style="left:848.00px;top:310.65px;font-size:8.09px;color:#f0f0f0;transform:scaleY(1.1);transform-origin:0 6.00px;-webkit-text-stroke:0.04px #f0f0f0;">чнаяИнформация.png</span>
<span class="t" style="left:848.00px;top:321.70px;font-size:7.71px;color:#cfcfcf;transform:scaleY(1.1);transform-origin:0 6.00px;-webkit-text-stroke:0.04px #cfcfcf;">Файл "PNG"</span>
<svg class="a" style="left:814px;top:298px;" width="29" height="30" viewBox="0 0 29 30"><g transform="translate(0.000 0.400) scale(0.9667 0.9667)"><rect x="2.6" y="2.6" width="24" height="25" fill="#151515"/><rect x="10.3" y="4.5" width="13.2" height="15.8" rx="0.8" fill="#343434"/><rect x="7.6" y="7.2" width="13.2" height="15.8" rx="0.8" fill="#3c3c3c"/><rect x="5" y="9.8" width="13.2" height="15.9" rx="0.8" fill="#464646"/></g></svg>
<div class="a" style="left:471px;top:335px;width:600px;height:200px;background:#202020;box-shadow:0 1px 12px 5px rgba(0,0,0,.45);"></div>
<svg class="a" style="left:460px;top:325px" width="564" height="144" viewBox="460 325 564 144">
<path d="M466.9 480V335.9Q466.9 330.9 471.9 330.9H1030V480Z" fill="#414141"/>
<path d="M467.4 480V336.4Q467.4 331.4 472.4 331.4H1030V480Z" fill="#202020"/>
<rect x="467.4" y="358" width="600" height="26.8" fill="#393939"/>
<path d="M493.3 358.2Q497.3 358.2 497.3 354.2V340.5Q497.3 336 501.8 336H653.3Q657.8 336 657.8 340.5V354.2Q657.8 358.2 661.8 358.2Z" fill="#393939"/>
<linearGradient id="bls" x1="0" y1="0" x2="0" y2="1"><stop offset="0" stop-color="#393939"/><stop offset="0.3" stop-color="#2d2d2d"/><stop offset="1" stop-color="#2b2b2b"/></linearGradient><rect x="467.4" y="384" width="4" height="90" fill="url(#bls)"/>
<rect x="470.4" y="384.8" width="600" height="100" rx="1.5" fill="#ffffff"/>
</svg>
<svg class="a" style="left:476px;top:342px;" width="10" height="9" viewBox="0 0 10 9"><g transform="translate(0.000 0.000)"><rect x="0.8" y="0.8" width="8.4" height="7.4" rx="1.4" fill="none" stroke="#e4e4e4" stroke-width="0.9"/><path d="M0.8 2.6H9.2" stroke="#e4e4e4" stroke-width="1.2"/><path d="M3 2.6V8.2" stroke="#e4e4e4" stroke-width="0.8"/></g></svg>
<svg class="a" style="left:502px;top:341px;" width="11" height="11" viewBox="0 0 11 11"><g transform="translate(0.000 0.000)"><circle cx="5.5" cy="5.5" r="4.9" fill="none" stroke="#e4e4e4" stroke-width="0.8"/><ellipse cx="5.5" cy="5.5" rx="2.2" ry="4.9" fill="none" stroke="#e4e4e4" stroke-width="0.7"/><path d="M0.9 3.9H10.1M0.9 7.1H10.1" stroke="#e4e4e4" stroke-width="0.7"/></g></svg>
<span class="t" style="left:519.00px;top:343.30px;font-size:7.81px;color:#f0f0f0;letter-spacing:0.006px;transform:scaleY(1.1);transform-origin:0 6.00px;-webkit-text-stroke:0.12px #f0f0f0;">GoogleMaps.svg</span>
<svg class="a" style="left:643px;top:343px;" width="8" height="7" viewBox="0 0 8 7"><g transform="translate(0.400 0.000)"><path d="M0.9 0.9L5.9 5.9M5.9 0.9L0.9 5.9" stroke="#ececec" stroke-width="1.05" fill="none"/></g></svg>
<svg class="a" style="left:664px;top:341px;" width="10" height="11" viewBox="0 0 10 11"><g transform="translate(0.000 0.300)"><path d="M5 0.3V9.7M0.3 5H9.7" stroke="#ececec" stroke-width="1.05" fill="none"/></g></svg>
<div class="a" style="left:1013.5px;top:344px;width:6.5px;height:1px;background:#e0e0e0;"></div>
<svg class="a" style="left:475px;top:366px;" width="12" height="11" viewBox="0 0 12 11"><g transform="translate(0.500 0.500)"><path d="M10.3 5H1M5 1L1 5L5 9" stroke="#6e6e6e" stroke-width="0.9" fill="none" stroke-linecap="round" stroke-linejoin="round"/></g></svg>
<svg class="a" style="left:499px;top:365px;" width="12" height="13" viewBox="0 0 12 13"><g transform="translate(0.000 0.500)"><path d="M10.4 4.6A4.7 4.7 0 1 0 10.7 7.2" stroke="#e4e4e4" stroke-width="0.9" fill="none" stroke-linecap="round"/><path d="M10.8 1.4V4.7H7.5" stroke="#e4e4e4" stroke-width="0.9" fill="none" stroke-linecap="round" stroke-linejoin="round"/></g></svg>
<svg class="a" style="left:523px;top:366px;" width="12" height="11" viewBox="0 0 12 11"><g transform="translate(0.500 0.000)"><path d="M1.3 5.3L5.5 1.3L9.7 5.3V9.8H6.8V6.8H4.2V9.8H1.3Z" fill="none" stroke="#e4e4e4" stroke-width="0.85" stroke-linejoin="round"/></g></svg>
<svg class="a" style="left:540px;top:356px;" width="460" height="30" viewBox="0 0 460 30"><g transform="translate(-540.000 -356.000)"><rect x="546" y="361.7" width="441.6" height="19.1" rx="9.55" fill="#2a2a2a" stroke="#555555" stroke-width="1"/></g></svg>
<svg class="a" style="left:550px;top:366px;" width="11" height="11" viewBox="0 0 11 11"><g transform="translate(0.500 0.500)"><circle cx="5" cy="5" r="4.3" fill="none" stroke="#e4e4e4" stroke-width="0.75"/><path d="M5 4.6V7.2" stroke="#e4e4e4" stroke-width="0.8"/><circle cx="5" cy="3.1" r="0.5" fill="#e4e4e4"/></g></svg>
<span class="t" style="left:564.00px;top:368.70px;font-size:7.81px;color:#f4f4f4;letter-spacing:0.007px;transform:scaleY(1.14);transform-origin:0 6.00px;-webkit-text-stroke:0.18px #f4f4f4;">Файл</span>
<span class="t" style="left:592.70px;top:366.80px;font-size:9.5px;color:#f2f2f2;">C:/Me/work/icons/Configuration/GoogleMaps.svg</span>
<svg class="a" style="left:970px;top:366px;" width="13" height="11" viewBox="0 0 13 11"><g transform="translate(0.500 0.000)"><path d="M6 0.9L7.5 4.1L11 4.5L8.4 6.9L9.1 10.3L6 8.6L2.9 10.3L3.6 6.9L1 4.5L4.5 4.1Z" fill="none" stroke="#d8d8d8" stroke-width="0.8" stroke-linejoin="round"/></g></svg>
<svg class="a" style="left:999px;top:366px;" width="12" height="11" viewBox="0 0 12 11"><g transform="translate(0.500 0.000)"><path d="M4 1.6Q4 0.6 5 0.6Q6 0.6 6 1.6V2.4H8Q8.8 2.4 8.8 3.2V4.8H9.6Q10.6 4.8 10.6 5.8Q10.6 6.8 9.6 6.8H8.8V9Q8.8 9.8 8 9.8H6V9Q6 8 5 8Q4 8 4 9V9.8H2.4Q1.6 9.8 1.6 9V7H2.2Q3.2 7 3.2 6Q3.2 5 2.2 5H1.6V3.2Q1.6 2.4 2.4 2.4H4Z" fill="none" stroke="#e4e4e4" stroke-width="0.85" stroke-linejoin="round"/></g></svg>
<div class="a" style="left:1017.5px;top:365px;width:1px;height:13px;background:#4a4a4a;"></div>
<svg class="a" style="left:471px;top:384px;" width="9" height="12" viewBox="0 0 9 12"><g transform="translate(0.600 0.900) scale(0.9500 0.9636)"><path d="M4 10.6Q3.4 8.6 1.6 6.6Q0.4 5.2 0.4 3.8Q0.5 0.5 4 0.4Q7.5 0.5 7.6 3.8Q7.6 5.2 6.4 6.6Q4.6 8.6 4 10.6Z" fill="#34a853"/><path d="M1.1 1.7Q2.3 0.4 4 0.4Q6.6 0.4 7.4 2.6L4 3.9Z" fill="#4285f4"/><path d="M1.1 1.7Q0.4 2.6 0.4 3.8Q0.4 4.9 1 5.8L4 3.9Z" fill="#ea4335"/><path d="M1 5.8Q1.5 6.7 2.3 7.5L5.4 4.3L4 3.9Z" fill="#fbbc04"/><circle cx="4" cy="3.8" r="1.3" fill="#fff"/></g></svg>
</div></body></html>
